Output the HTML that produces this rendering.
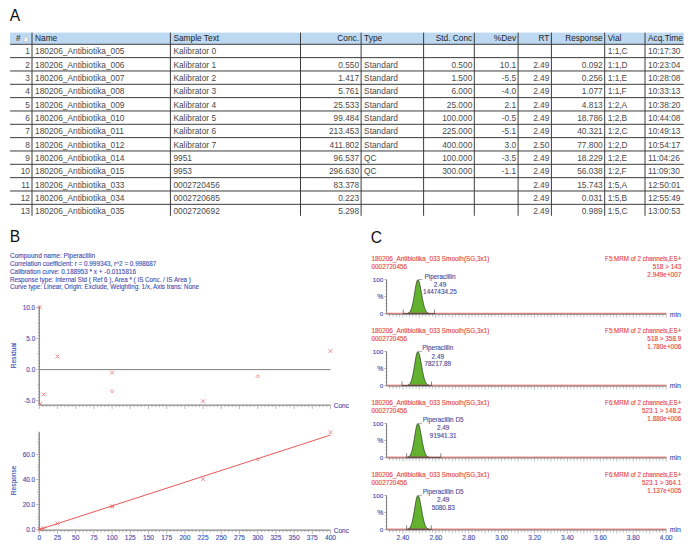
<!DOCTYPE html>
<html><head><meta charset="utf-8"><style>
html,body{margin:0;padding:0;background:#fff;}
svg{display:block;font-family:"Liberation Sans", sans-serif;}
</style></head><body>
<svg width="700" height="555" viewBox="0 0 700 555">
<rect width="700" height="555" fill="#fff"/>
<text x="9.7" y="21.2" font-size="15.6" fill="#111">A</text>
<text x="9.7" y="242.2" font-size="15.6" fill="#111">B</text>
<text x="370.7" y="242.6" font-size="15.6" fill="#111">C</text>
<rect x="10" y="32.6" width="673.8" height="11.699999999999996" fill="#bdd8f1"/>
<line x1="10" y1="44.30" x2="683.8" y2="44.30" stroke="#3c3c3c" stroke-width="1.0"/>
<line x1="10" y1="57.63" x2="683.8" y2="57.63" stroke="#3c3c3c" stroke-width="1.0"/>
<line x1="10" y1="70.97" x2="683.8" y2="70.97" stroke="#3c3c3c" stroke-width="1.0"/>
<line x1="10" y1="84.31" x2="683.8" y2="84.31" stroke="#3c3c3c" stroke-width="1.0"/>
<line x1="10" y1="97.64" x2="683.8" y2="97.64" stroke="#3c3c3c" stroke-width="1.0"/>
<line x1="10" y1="110.98" x2="683.8" y2="110.98" stroke="#3c3c3c" stroke-width="1.0"/>
<line x1="10" y1="124.31" x2="683.8" y2="124.31" stroke="#3c3c3c" stroke-width="1.0"/>
<line x1="10" y1="137.64" x2="683.8" y2="137.64" stroke="#3c3c3c" stroke-width="1.0"/>
<line x1="10" y1="150.98" x2="683.8" y2="150.98" stroke="#3c3c3c" stroke-width="1.0"/>
<line x1="10" y1="164.31" x2="683.8" y2="164.31" stroke="#3c3c3c" stroke-width="1.0"/>
<line x1="10" y1="177.65" x2="683.8" y2="177.65" stroke="#3c3c3c" stroke-width="1.0"/>
<line x1="10" y1="190.99" x2="683.8" y2="190.99" stroke="#3c3c3c" stroke-width="1.0"/>
<line x1="10" y1="204.32" x2="683.8" y2="204.32" stroke="#3c3c3c" stroke-width="1.0"/>
<line x1="32" y1="32.6" x2="32" y2="215.8" stroke="#3c3c3c" stroke-width="1.0"/>
<line x1="170.4" y1="32.6" x2="170.4" y2="215.8" stroke="#3c3c3c" stroke-width="1.0"/>
<line x1="300.5" y1="32.6" x2="300.5" y2="215.8" stroke="#3c3c3c" stroke-width="1.0"/>
<line x1="361.1" y1="32.6" x2="361.1" y2="215.8" stroke="#3c3c3c" stroke-width="1.0"/>
<line x1="423.6" y1="32.6" x2="423.6" y2="215.8" stroke="#3c3c3c" stroke-width="1.0"/>
<line x1="474.3" y1="32.6" x2="474.3" y2="215.8" stroke="#3c3c3c" stroke-width="1.0"/>
<line x1="518.1" y1="32.6" x2="518.1" y2="215.8" stroke="#3c3c3c" stroke-width="1.0"/>
<line x1="551.4" y1="32.6" x2="551.4" y2="215.8" stroke="#3c3c3c" stroke-width="1.0"/>
<line x1="604.7" y1="32.6" x2="604.7" y2="215.8" stroke="#3c3c3c" stroke-width="1.0"/>
<line x1="645" y1="32.6" x2="645" y2="215.8" stroke="#3c3c3c" stroke-width="1.0"/>
<text x="20.6" y="41" font-size="8.35" font-weight="bold" fill="#4a4a4a" text-anchor="end">#</text>
<path d="M23.6 41.4 L26.0 35.0 L28.4 41.4 Z" fill="#fbfbfb" stroke="#b8b8b8" stroke-width="0.6"/>
<text transform="translate(35.00 41.00) scale(0.9435 1)" font-size="8.85" fill="#262626">Name</text>
<text transform="translate(173.40 41.00) scale(0.9435 1)" font-size="8.85" fill="#262626">Sample Text</text>
<text transform="translate(359.10 41.00) scale(0.9435 1)" font-size="8.85" fill="#262626" text-anchor="end">Conc.</text>
<text transform="translate(364.10 41.00) scale(0.9435 1)" font-size="8.85" fill="#262626">Type</text>
<text transform="translate(472.30 41.00) scale(0.9435 1)" font-size="8.85" fill="#262626" text-anchor="end">Std. Conc</text>
<text transform="translate(516.10 41.00) scale(0.9435 1)" font-size="8.85" fill="#262626" text-anchor="end">%Dev</text>
<text transform="translate(549.40 41.00) scale(0.9435 1)" font-size="8.85" fill="#262626" text-anchor="end">RT</text>
<text transform="translate(602.70 41.00) scale(0.9435 1)" font-size="8.85" fill="#262626" text-anchor="end">Response</text>
<text transform="translate(607.70 41.00) scale(0.9435 1)" font-size="8.85" fill="#262626">Vial</text>
<text transform="translate(648.00 41.00) scale(0.9435 1)" font-size="8.85" fill="#262626">Acq.Time</text>
<text transform="translate(30.00 54.30) scale(0.9435 1)" font-size="8.85" fill="#4a4a4a" text-anchor="end">1</text>
<text transform="translate(35.00 54.30) scale(0.9435 1)" font-size="8.85" fill="#4a4a4a">180206_Antibiotika_005</text>
<text transform="translate(173.40 54.30) scale(0.9435 1)" font-size="8.85" fill="#4a4a4a">Kalibrator 0</text>
<text transform="translate(607.70 54.30) scale(0.9435 1)" font-size="8.85" fill="#4a4a4a">1:1,C</text>
<text transform="translate(648.00 54.30) scale(0.9435 1)" font-size="8.85" fill="#4a4a4a">10:17:30</text>
<text transform="translate(30.00 67.63) scale(0.9435 1)" font-size="8.85" fill="#4a4a4a" text-anchor="end">2</text>
<text transform="translate(35.00 67.63) scale(0.9435 1)" font-size="8.85" fill="#4a4a4a">180206_Antibiotika_006</text>
<text transform="translate(173.40 67.63) scale(0.9435 1)" font-size="8.85" fill="#4a4a4a">Kalibrator 1</text>
<text transform="translate(359.10 67.63) scale(0.9435 1)" font-size="8.85" fill="#4a4a4a" text-anchor="end">0.550</text>
<text transform="translate(364.10 67.63) scale(0.9435 1)" font-size="8.85" fill="#4a4a4a">Standard</text>
<text transform="translate(472.30 67.63) scale(0.9435 1)" font-size="8.85" fill="#4a4a4a" text-anchor="end">0.500</text>
<text transform="translate(516.10 67.63) scale(0.9435 1)" font-size="8.85" fill="#4a4a4a" text-anchor="end">10.1</text>
<text transform="translate(549.40 67.63) scale(0.9435 1)" font-size="8.85" fill="#4a4a4a" text-anchor="end">2.49</text>
<text transform="translate(602.70 67.63) scale(0.9435 1)" font-size="8.85" fill="#4a4a4a" text-anchor="end">0.092</text>
<text transform="translate(607.70 67.63) scale(0.9435 1)" font-size="8.85" fill="#4a4a4a">1:1,D</text>
<text transform="translate(648.00 67.63) scale(0.9435 1)" font-size="8.85" fill="#4a4a4a">10:23:04</text>
<text transform="translate(30.00 80.97) scale(0.9435 1)" font-size="8.85" fill="#4a4a4a" text-anchor="end">3</text>
<text transform="translate(35.00 80.97) scale(0.9435 1)" font-size="8.85" fill="#4a4a4a">180206_Antibiotika_007</text>
<text transform="translate(173.40 80.97) scale(0.9435 1)" font-size="8.85" fill="#4a4a4a">Kalibrator 2</text>
<text transform="translate(359.10 80.97) scale(0.9435 1)" font-size="8.85" fill="#4a4a4a" text-anchor="end">1.417</text>
<text transform="translate(364.10 80.97) scale(0.9435 1)" font-size="8.85" fill="#4a4a4a">Standard</text>
<text transform="translate(472.30 80.97) scale(0.9435 1)" font-size="8.85" fill="#4a4a4a" text-anchor="end">1.500</text>
<text transform="translate(516.10 80.97) scale(0.9435 1)" font-size="8.85" fill="#4a4a4a" text-anchor="end">-5.5</text>
<text transform="translate(549.40 80.97) scale(0.9435 1)" font-size="8.85" fill="#4a4a4a" text-anchor="end">2.49</text>
<text transform="translate(602.70 80.97) scale(0.9435 1)" font-size="8.85" fill="#4a4a4a" text-anchor="end">0.256</text>
<text transform="translate(607.70 80.97) scale(0.9435 1)" font-size="8.85" fill="#4a4a4a">1:1,E</text>
<text transform="translate(648.00 80.97) scale(0.9435 1)" font-size="8.85" fill="#4a4a4a">10:28:08</text>
<text transform="translate(30.00 94.31) scale(0.9435 1)" font-size="8.85" fill="#4a4a4a" text-anchor="end">4</text>
<text transform="translate(35.00 94.31) scale(0.9435 1)" font-size="8.85" fill="#4a4a4a">180206_Antibiotika_008</text>
<text transform="translate(173.40 94.31) scale(0.9435 1)" font-size="8.85" fill="#4a4a4a">Kalibrator 3</text>
<text transform="translate(359.10 94.31) scale(0.9435 1)" font-size="8.85" fill="#4a4a4a" text-anchor="end">5.761</text>
<text transform="translate(364.10 94.31) scale(0.9435 1)" font-size="8.85" fill="#4a4a4a">Standard</text>
<text transform="translate(472.30 94.31) scale(0.9435 1)" font-size="8.85" fill="#4a4a4a" text-anchor="end">6.000</text>
<text transform="translate(516.10 94.31) scale(0.9435 1)" font-size="8.85" fill="#4a4a4a" text-anchor="end">-4.0</text>
<text transform="translate(549.40 94.31) scale(0.9435 1)" font-size="8.85" fill="#4a4a4a" text-anchor="end">2.49</text>
<text transform="translate(602.70 94.31) scale(0.9435 1)" font-size="8.85" fill="#4a4a4a" text-anchor="end">1.077</text>
<text transform="translate(607.70 94.31) scale(0.9435 1)" font-size="8.85" fill="#4a4a4a">1:1,F</text>
<text transform="translate(648.00 94.31) scale(0.9435 1)" font-size="8.85" fill="#4a4a4a">10:33:13</text>
<text transform="translate(30.00 107.64) scale(0.9435 1)" font-size="8.85" fill="#4a4a4a" text-anchor="end">5</text>
<text transform="translate(35.00 107.64) scale(0.9435 1)" font-size="8.85" fill="#4a4a4a">180206_Antibiotika_009</text>
<text transform="translate(173.40 107.64) scale(0.9435 1)" font-size="8.85" fill="#4a4a4a">Kalibrator 4</text>
<text transform="translate(359.10 107.64) scale(0.9435 1)" font-size="8.85" fill="#4a4a4a" text-anchor="end">25.533</text>
<text transform="translate(364.10 107.64) scale(0.9435 1)" font-size="8.85" fill="#4a4a4a">Standard</text>
<text transform="translate(472.30 107.64) scale(0.9435 1)" font-size="8.85" fill="#4a4a4a" text-anchor="end">25.000</text>
<text transform="translate(516.10 107.64) scale(0.9435 1)" font-size="8.85" fill="#4a4a4a" text-anchor="end">2.1</text>
<text transform="translate(549.40 107.64) scale(0.9435 1)" font-size="8.85" fill="#4a4a4a" text-anchor="end">2.49</text>
<text transform="translate(602.70 107.64) scale(0.9435 1)" font-size="8.85" fill="#4a4a4a" text-anchor="end">4.813</text>
<text transform="translate(607.70 107.64) scale(0.9435 1)" font-size="8.85" fill="#4a4a4a">1:2,A</text>
<text transform="translate(648.00 107.64) scale(0.9435 1)" font-size="8.85" fill="#4a4a4a">10:38:20</text>
<text transform="translate(30.00 120.98) scale(0.9435 1)" font-size="8.85" fill="#4a4a4a" text-anchor="end">6</text>
<text transform="translate(35.00 120.98) scale(0.9435 1)" font-size="8.85" fill="#4a4a4a">180206_Antibiotika_010</text>
<text transform="translate(173.40 120.98) scale(0.9435 1)" font-size="8.85" fill="#4a4a4a">Kalibrator 5</text>
<text transform="translate(359.10 120.98) scale(0.9435 1)" font-size="8.85" fill="#4a4a4a" text-anchor="end">99.484</text>
<text transform="translate(364.10 120.98) scale(0.9435 1)" font-size="8.85" fill="#4a4a4a">Standard</text>
<text transform="translate(472.30 120.98) scale(0.9435 1)" font-size="8.85" fill="#4a4a4a" text-anchor="end">100.000</text>
<text transform="translate(516.10 120.98) scale(0.9435 1)" font-size="8.85" fill="#4a4a4a" text-anchor="end">-0.5</text>
<text transform="translate(549.40 120.98) scale(0.9435 1)" font-size="8.85" fill="#4a4a4a" text-anchor="end">2.49</text>
<text transform="translate(602.70 120.98) scale(0.9435 1)" font-size="8.85" fill="#4a4a4a" text-anchor="end">18.786</text>
<text transform="translate(607.70 120.98) scale(0.9435 1)" font-size="8.85" fill="#4a4a4a">1:2,B</text>
<text transform="translate(648.00 120.98) scale(0.9435 1)" font-size="8.85" fill="#4a4a4a">10:44:08</text>
<text transform="translate(30.00 134.31) scale(0.9435 1)" font-size="8.85" fill="#4a4a4a" text-anchor="end">7</text>
<text transform="translate(35.00 134.31) scale(0.9435 1)" font-size="8.85" fill="#4a4a4a">180206_Antibiotika_011</text>
<text transform="translate(173.40 134.31) scale(0.9435 1)" font-size="8.85" fill="#4a4a4a">Kalibrator 6</text>
<text transform="translate(359.10 134.31) scale(0.9435 1)" font-size="8.85" fill="#4a4a4a" text-anchor="end">213.453</text>
<text transform="translate(364.10 134.31) scale(0.9435 1)" font-size="8.85" fill="#4a4a4a">Standard</text>
<text transform="translate(472.30 134.31) scale(0.9435 1)" font-size="8.85" fill="#4a4a4a" text-anchor="end">225.000</text>
<text transform="translate(516.10 134.31) scale(0.9435 1)" font-size="8.85" fill="#4a4a4a" text-anchor="end">-5.1</text>
<text transform="translate(549.40 134.31) scale(0.9435 1)" font-size="8.85" fill="#4a4a4a" text-anchor="end">2.49</text>
<text transform="translate(602.70 134.31) scale(0.9435 1)" font-size="8.85" fill="#4a4a4a" text-anchor="end">40.321</text>
<text transform="translate(607.70 134.31) scale(0.9435 1)" font-size="8.85" fill="#4a4a4a">1:2,C</text>
<text transform="translate(648.00 134.31) scale(0.9435 1)" font-size="8.85" fill="#4a4a4a">10:49:13</text>
<text transform="translate(30.00 147.64) scale(0.9435 1)" font-size="8.85" fill="#4a4a4a" text-anchor="end">8</text>
<text transform="translate(35.00 147.64) scale(0.9435 1)" font-size="8.85" fill="#4a4a4a">180206_Antibiotika_012</text>
<text transform="translate(173.40 147.64) scale(0.9435 1)" font-size="8.85" fill="#4a4a4a">Kalibrator 7</text>
<text transform="translate(359.10 147.64) scale(0.9435 1)" font-size="8.85" fill="#4a4a4a" text-anchor="end">411.802</text>
<text transform="translate(364.10 147.64) scale(0.9435 1)" font-size="8.85" fill="#4a4a4a">Standard</text>
<text transform="translate(472.30 147.64) scale(0.9435 1)" font-size="8.85" fill="#4a4a4a" text-anchor="end">400.000</text>
<text transform="translate(516.10 147.64) scale(0.9435 1)" font-size="8.85" fill="#4a4a4a" text-anchor="end">3.0</text>
<text transform="translate(549.40 147.64) scale(0.9435 1)" font-size="8.85" fill="#4a4a4a" text-anchor="end">2.50</text>
<text transform="translate(602.70 147.64) scale(0.9435 1)" font-size="8.85" fill="#4a4a4a" text-anchor="end">77.800</text>
<text transform="translate(607.70 147.64) scale(0.9435 1)" font-size="8.85" fill="#4a4a4a">1:2,D</text>
<text transform="translate(648.00 147.64) scale(0.9435 1)" font-size="8.85" fill="#4a4a4a">10:54:17</text>
<text transform="translate(30.00 160.98) scale(0.9435 1)" font-size="8.85" fill="#4a4a4a" text-anchor="end">9</text>
<text transform="translate(35.00 160.98) scale(0.9435 1)" font-size="8.85" fill="#4a4a4a">180206_Antibiotika_014</text>
<text transform="translate(173.40 160.98) scale(0.9435 1)" font-size="8.85" fill="#4a4a4a">9951</text>
<text transform="translate(359.10 160.98) scale(0.9435 1)" font-size="8.85" fill="#4a4a4a" text-anchor="end">96.537</text>
<text transform="translate(364.10 160.98) scale(0.9435 1)" font-size="8.85" fill="#4a4a4a">QC</text>
<text transform="translate(472.30 160.98) scale(0.9435 1)" font-size="8.85" fill="#4a4a4a" text-anchor="end">100.000</text>
<text transform="translate(516.10 160.98) scale(0.9435 1)" font-size="8.85" fill="#4a4a4a" text-anchor="end">-3.5</text>
<text transform="translate(549.40 160.98) scale(0.9435 1)" font-size="8.85" fill="#4a4a4a" text-anchor="end">2.49</text>
<text transform="translate(602.70 160.98) scale(0.9435 1)" font-size="8.85" fill="#4a4a4a" text-anchor="end">18.229</text>
<text transform="translate(607.70 160.98) scale(0.9435 1)" font-size="8.85" fill="#4a4a4a">1:2,E</text>
<text transform="translate(648.00 160.98) scale(0.9435 1)" font-size="8.85" fill="#4a4a4a">11:04:26</text>
<text transform="translate(30.00 174.31) scale(0.9435 1)" font-size="8.85" fill="#4a4a4a" text-anchor="end">10</text>
<text transform="translate(35.00 174.31) scale(0.9435 1)" font-size="8.85" fill="#4a4a4a">180206_Antibiotika_015</text>
<text transform="translate(173.40 174.31) scale(0.9435 1)" font-size="8.85" fill="#4a4a4a">9953</text>
<text transform="translate(359.10 174.31) scale(0.9435 1)" font-size="8.85" fill="#4a4a4a" text-anchor="end">296.630</text>
<text transform="translate(364.10 174.31) scale(0.9435 1)" font-size="8.85" fill="#4a4a4a">QC</text>
<text transform="translate(472.30 174.31) scale(0.9435 1)" font-size="8.85" fill="#4a4a4a" text-anchor="end">300.000</text>
<text transform="translate(516.10 174.31) scale(0.9435 1)" font-size="8.85" fill="#4a4a4a" text-anchor="end">-1.1</text>
<text transform="translate(549.40 174.31) scale(0.9435 1)" font-size="8.85" fill="#4a4a4a" text-anchor="end">2.49</text>
<text transform="translate(602.70 174.31) scale(0.9435 1)" font-size="8.85" fill="#4a4a4a" text-anchor="end">56.038</text>
<text transform="translate(607.70 174.31) scale(0.9435 1)" font-size="8.85" fill="#4a4a4a">1:2,F</text>
<text transform="translate(648.00 174.31) scale(0.9435 1)" font-size="8.85" fill="#4a4a4a">11:09:30</text>
<text transform="translate(30.00 187.65) scale(0.9435 1)" font-size="8.85" fill="#4a4a4a" text-anchor="end">11</text>
<text transform="translate(35.00 187.65) scale(0.9435 1)" font-size="8.85" fill="#4a4a4a">180206_Antibiotika_033</text>
<text transform="translate(173.40 187.65) scale(0.9435 1)" font-size="8.85" fill="#4a4a4a">0002720456</text>
<text transform="translate(359.10 187.65) scale(0.9435 1)" font-size="8.85" fill="#4a4a4a" text-anchor="end">83.378</text>
<text transform="translate(549.40 187.65) scale(0.9435 1)" font-size="8.85" fill="#4a4a4a" text-anchor="end">2.49</text>
<text transform="translate(602.70 187.65) scale(0.9435 1)" font-size="8.85" fill="#4a4a4a" text-anchor="end">15.743</text>
<text transform="translate(607.70 187.65) scale(0.9435 1)" font-size="8.85" fill="#4a4a4a">1:5,A</text>
<text transform="translate(648.00 187.65) scale(0.9435 1)" font-size="8.85" fill="#4a4a4a">12:50:01</text>
<text transform="translate(30.00 200.99) scale(0.9435 1)" font-size="8.85" fill="#4a4a4a" text-anchor="end">12</text>
<text transform="translate(35.00 200.99) scale(0.9435 1)" font-size="8.85" fill="#4a4a4a">180206_Antibiotika_034</text>
<text transform="translate(173.40 200.99) scale(0.9435 1)" font-size="8.85" fill="#4a4a4a">0002720685</text>
<text transform="translate(359.10 200.99) scale(0.9435 1)" font-size="8.85" fill="#4a4a4a" text-anchor="end">0.223</text>
<text transform="translate(549.40 200.99) scale(0.9435 1)" font-size="8.85" fill="#4a4a4a" text-anchor="end">2.49</text>
<text transform="translate(602.70 200.99) scale(0.9435 1)" font-size="8.85" fill="#4a4a4a" text-anchor="end">0.031</text>
<text transform="translate(607.70 200.99) scale(0.9435 1)" font-size="8.85" fill="#4a4a4a">1:5,B</text>
<text transform="translate(648.00 200.99) scale(0.9435 1)" font-size="8.85" fill="#4a4a4a">12:55:49</text>
<text transform="translate(30.00 214.32) scale(0.9435 1)" font-size="8.85" fill="#4a4a4a" text-anchor="end">13</text>
<text transform="translate(35.00 214.32) scale(0.9435 1)" font-size="8.85" fill="#4a4a4a">180206_Antibiotika_035</text>
<text transform="translate(173.40 214.32) scale(0.9435 1)" font-size="8.85" fill="#4a4a4a">0002720692</text>
<text transform="translate(359.10 214.32) scale(0.9435 1)" font-size="8.85" fill="#4a4a4a" text-anchor="end">5.298</text>
<text transform="translate(549.40 214.32) scale(0.9435 1)" font-size="8.85" fill="#4a4a4a" text-anchor="end">2.49</text>
<text transform="translate(602.70 214.32) scale(0.9435 1)" font-size="8.85" fill="#4a4a4a" text-anchor="end">0.989</text>
<text transform="translate(607.70 214.32) scale(0.9435 1)" font-size="8.85" fill="#4a4a4a">1:5,C</text>
<text transform="translate(648.00 214.32) scale(0.9435 1)" font-size="8.85" fill="#4a4a4a">13:00:53</text>
<text x="10" y="258.30" font-size="6.5" fill="#3f4fb0" stroke="#3f4fb0" stroke-width="0.12" textLength="85.0" lengthAdjust="spacingAndGlyphs">Compound name: Piperacillin</text>
<text x="10" y="266.05" font-size="6.5" fill="#3f4fb0" stroke="#3f4fb0" stroke-width="0.12" textLength="146.3" lengthAdjust="spacingAndGlyphs">Correlation coefficient: r = 0.999343, r^2 = 0.998687</text>
<text x="10" y="273.80" font-size="6.5" fill="#3f4fb0" stroke="#3f4fb0" stroke-width="0.12" textLength="126.0" lengthAdjust="spacingAndGlyphs">Calibration curve: 0.188953 * x + -0.0115816</text>
<text x="10" y="281.55" font-size="6.5" fill="#3f4fb0" stroke="#3f4fb0" stroke-width="0.12" textLength="180.9" lengthAdjust="spacingAndGlyphs">Response type: Internal Std ( Ref 6 ), Area * ( IS Conc. / IS Area )</text>
<text x="10" y="289.30" font-size="6.5" fill="#3f4fb0" stroke="#3f4fb0" stroke-width="0.12" textLength="189.1" lengthAdjust="spacingAndGlyphs">Curve type: Linear, Origin: Exclude, Weighting: 1/x, Axis trans: None</text>
<line x1="39.3" y1="306.2" x2="39.3" y2="405.1" stroke="#8a8a8a" stroke-width="1.3"/>
<line x1="39.3" y1="405.1" x2="330.5" y2="405.1" stroke="#8a8a8a" stroke-width="1.3"/>
<line x1="39.3" y1="369.6" x2="330.5" y2="369.6" stroke="#707070" stroke-width="0.9"/>
<line x1="36.30" y1="307.60" x2="39.3" y2="307.60" stroke="#8a8a8a" stroke-width="0.6"/>
<line x1="37.90" y1="310.70" x2="39.3" y2="310.70" stroke="#8a8a8a" stroke-width="0.6"/>
<line x1="37.90" y1="313.80" x2="39.3" y2="313.80" stroke="#8a8a8a" stroke-width="0.6"/>
<line x1="37.90" y1="316.90" x2="39.3" y2="316.90" stroke="#8a8a8a" stroke-width="0.6"/>
<line x1="37.90" y1="320.00" x2="39.3" y2="320.00" stroke="#8a8a8a" stroke-width="0.6"/>
<line x1="37.10" y1="323.10" x2="39.3" y2="323.10" stroke="#8a8a8a" stroke-width="0.6"/>
<line x1="37.90" y1="326.20" x2="39.3" y2="326.20" stroke="#8a8a8a" stroke-width="0.6"/>
<line x1="37.90" y1="329.30" x2="39.3" y2="329.30" stroke="#8a8a8a" stroke-width="0.6"/>
<line x1="37.90" y1="332.40" x2="39.3" y2="332.40" stroke="#8a8a8a" stroke-width="0.6"/>
<line x1="37.90" y1="335.50" x2="39.3" y2="335.50" stroke="#8a8a8a" stroke-width="0.6"/>
<line x1="36.30" y1="338.60" x2="39.3" y2="338.60" stroke="#8a8a8a" stroke-width="0.6"/>
<line x1="37.90" y1="341.70" x2="39.3" y2="341.70" stroke="#8a8a8a" stroke-width="0.6"/>
<line x1="37.90" y1="344.80" x2="39.3" y2="344.80" stroke="#8a8a8a" stroke-width="0.6"/>
<line x1="37.90" y1="347.90" x2="39.3" y2="347.90" stroke="#8a8a8a" stroke-width="0.6"/>
<line x1="37.90" y1="351.00" x2="39.3" y2="351.00" stroke="#8a8a8a" stroke-width="0.6"/>
<line x1="37.10" y1="354.10" x2="39.3" y2="354.10" stroke="#8a8a8a" stroke-width="0.6"/>
<line x1="37.90" y1="357.20" x2="39.3" y2="357.20" stroke="#8a8a8a" stroke-width="0.6"/>
<line x1="37.90" y1="360.30" x2="39.3" y2="360.30" stroke="#8a8a8a" stroke-width="0.6"/>
<line x1="37.90" y1="363.40" x2="39.3" y2="363.40" stroke="#8a8a8a" stroke-width="0.6"/>
<line x1="37.90" y1="366.50" x2="39.3" y2="366.50" stroke="#8a8a8a" stroke-width="0.6"/>
<line x1="36.30" y1="369.60" x2="39.3" y2="369.60" stroke="#8a8a8a" stroke-width="0.6"/>
<line x1="37.90" y1="372.70" x2="39.3" y2="372.70" stroke="#8a8a8a" stroke-width="0.6"/>
<line x1="37.90" y1="375.80" x2="39.3" y2="375.80" stroke="#8a8a8a" stroke-width="0.6"/>
<line x1="37.90" y1="378.90" x2="39.3" y2="378.90" stroke="#8a8a8a" stroke-width="0.6"/>
<line x1="37.90" y1="382.00" x2="39.3" y2="382.00" stroke="#8a8a8a" stroke-width="0.6"/>
<line x1="37.10" y1="385.10" x2="39.3" y2="385.10" stroke="#8a8a8a" stroke-width="0.6"/>
<line x1="37.90" y1="388.20" x2="39.3" y2="388.20" stroke="#8a8a8a" stroke-width="0.6"/>
<line x1="37.90" y1="391.30" x2="39.3" y2="391.30" stroke="#8a8a8a" stroke-width="0.6"/>
<line x1="37.90" y1="394.40" x2="39.3" y2="394.40" stroke="#8a8a8a" stroke-width="0.6"/>
<line x1="37.90" y1="397.50" x2="39.3" y2="397.50" stroke="#8a8a8a" stroke-width="0.6"/>
<line x1="36.30" y1="400.60" x2="39.3" y2="400.60" stroke="#8a8a8a" stroke-width="0.6"/>
<line x1="37.90" y1="403.70" x2="39.3" y2="403.70" stroke="#8a8a8a" stroke-width="0.6"/>
<text x="35.2" y="310.20" font-size="6.4" fill="#3f4fb0" stroke="#3f4fb0" stroke-width="0.12" text-anchor="end">10.0</text>
<text x="35.2" y="341.20" font-size="6.4" fill="#3f4fb0" stroke="#3f4fb0" stroke-width="0.12" text-anchor="end">5.0</text>
<text x="35.2" y="372.20" font-size="6.4" fill="#3f4fb0" stroke="#3f4fb0" stroke-width="0.12" text-anchor="end">0.0</text>
<text x="35.2" y="403.20" font-size="6.4" fill="#3f4fb0" stroke="#3f4fb0" stroke-width="0.12" text-anchor="end">-5.0</text>
<line x1="39.30" y1="405.1" x2="39.30" y2="408.90000000000003" stroke="#8a8a8a" stroke-width="0.6"/>
<line x1="42.94" y1="405.1" x2="42.94" y2="407.1" stroke="#8a8a8a" stroke-width="0.6"/>
<line x1="46.58" y1="405.1" x2="46.58" y2="407.1" stroke="#8a8a8a" stroke-width="0.6"/>
<line x1="50.22" y1="405.1" x2="50.22" y2="407.1" stroke="#8a8a8a" stroke-width="0.6"/>
<line x1="53.86" y1="405.1" x2="53.86" y2="407.1" stroke="#8a8a8a" stroke-width="0.6"/>
<line x1="57.50" y1="405.1" x2="57.50" y2="408.90000000000003" stroke="#8a8a8a" stroke-width="0.6"/>
<line x1="61.14" y1="405.1" x2="61.14" y2="407.1" stroke="#8a8a8a" stroke-width="0.6"/>
<line x1="64.78" y1="405.1" x2="64.78" y2="407.1" stroke="#8a8a8a" stroke-width="0.6"/>
<line x1="68.42" y1="405.1" x2="68.42" y2="407.1" stroke="#8a8a8a" stroke-width="0.6"/>
<line x1="72.06" y1="405.1" x2="72.06" y2="407.1" stroke="#8a8a8a" stroke-width="0.6"/>
<line x1="75.70" y1="405.1" x2="75.70" y2="408.90000000000003" stroke="#8a8a8a" stroke-width="0.6"/>
<line x1="79.34" y1="405.1" x2="79.34" y2="407.1" stroke="#8a8a8a" stroke-width="0.6"/>
<line x1="82.98" y1="405.1" x2="82.98" y2="407.1" stroke="#8a8a8a" stroke-width="0.6"/>
<line x1="86.62" y1="405.1" x2="86.62" y2="407.1" stroke="#8a8a8a" stroke-width="0.6"/>
<line x1="90.26" y1="405.1" x2="90.26" y2="407.1" stroke="#8a8a8a" stroke-width="0.6"/>
<line x1="93.90" y1="405.1" x2="93.90" y2="408.90000000000003" stroke="#8a8a8a" stroke-width="0.6"/>
<line x1="97.54" y1="405.1" x2="97.54" y2="407.1" stroke="#8a8a8a" stroke-width="0.6"/>
<line x1="101.18" y1="405.1" x2="101.18" y2="407.1" stroke="#8a8a8a" stroke-width="0.6"/>
<line x1="104.82" y1="405.1" x2="104.82" y2="407.1" stroke="#8a8a8a" stroke-width="0.6"/>
<line x1="108.46" y1="405.1" x2="108.46" y2="407.1" stroke="#8a8a8a" stroke-width="0.6"/>
<line x1="112.10" y1="405.1" x2="112.10" y2="408.90000000000003" stroke="#8a8a8a" stroke-width="0.6"/>
<line x1="115.74" y1="405.1" x2="115.74" y2="407.1" stroke="#8a8a8a" stroke-width="0.6"/>
<line x1="119.38" y1="405.1" x2="119.38" y2="407.1" stroke="#8a8a8a" stroke-width="0.6"/>
<line x1="123.02" y1="405.1" x2="123.02" y2="407.1" stroke="#8a8a8a" stroke-width="0.6"/>
<line x1="126.66" y1="405.1" x2="126.66" y2="407.1" stroke="#8a8a8a" stroke-width="0.6"/>
<line x1="130.30" y1="405.1" x2="130.30" y2="408.90000000000003" stroke="#8a8a8a" stroke-width="0.6"/>
<line x1="133.94" y1="405.1" x2="133.94" y2="407.1" stroke="#8a8a8a" stroke-width="0.6"/>
<line x1="137.58" y1="405.1" x2="137.58" y2="407.1" stroke="#8a8a8a" stroke-width="0.6"/>
<line x1="141.22" y1="405.1" x2="141.22" y2="407.1" stroke="#8a8a8a" stroke-width="0.6"/>
<line x1="144.86" y1="405.1" x2="144.86" y2="407.1" stroke="#8a8a8a" stroke-width="0.6"/>
<line x1="148.50" y1="405.1" x2="148.50" y2="408.90000000000003" stroke="#8a8a8a" stroke-width="0.6"/>
<line x1="152.14" y1="405.1" x2="152.14" y2="407.1" stroke="#8a8a8a" stroke-width="0.6"/>
<line x1="155.78" y1="405.1" x2="155.78" y2="407.1" stroke="#8a8a8a" stroke-width="0.6"/>
<line x1="159.42" y1="405.1" x2="159.42" y2="407.1" stroke="#8a8a8a" stroke-width="0.6"/>
<line x1="163.06" y1="405.1" x2="163.06" y2="407.1" stroke="#8a8a8a" stroke-width="0.6"/>
<line x1="166.70" y1="405.1" x2="166.70" y2="408.90000000000003" stroke="#8a8a8a" stroke-width="0.6"/>
<line x1="170.34" y1="405.1" x2="170.34" y2="407.1" stroke="#8a8a8a" stroke-width="0.6"/>
<line x1="173.98" y1="405.1" x2="173.98" y2="407.1" stroke="#8a8a8a" stroke-width="0.6"/>
<line x1="177.62" y1="405.1" x2="177.62" y2="407.1" stroke="#8a8a8a" stroke-width="0.6"/>
<line x1="181.26" y1="405.1" x2="181.26" y2="407.1" stroke="#8a8a8a" stroke-width="0.6"/>
<line x1="184.90" y1="405.1" x2="184.90" y2="408.90000000000003" stroke="#8a8a8a" stroke-width="0.6"/>
<line x1="188.54" y1="405.1" x2="188.54" y2="407.1" stroke="#8a8a8a" stroke-width="0.6"/>
<line x1="192.18" y1="405.1" x2="192.18" y2="407.1" stroke="#8a8a8a" stroke-width="0.6"/>
<line x1="195.82" y1="405.1" x2="195.82" y2="407.1" stroke="#8a8a8a" stroke-width="0.6"/>
<line x1="199.46" y1="405.1" x2="199.46" y2="407.1" stroke="#8a8a8a" stroke-width="0.6"/>
<line x1="203.10" y1="405.1" x2="203.10" y2="408.90000000000003" stroke="#8a8a8a" stroke-width="0.6"/>
<line x1="206.74" y1="405.1" x2="206.74" y2="407.1" stroke="#8a8a8a" stroke-width="0.6"/>
<line x1="210.38" y1="405.1" x2="210.38" y2="407.1" stroke="#8a8a8a" stroke-width="0.6"/>
<line x1="214.02" y1="405.1" x2="214.02" y2="407.1" stroke="#8a8a8a" stroke-width="0.6"/>
<line x1="217.66" y1="405.1" x2="217.66" y2="407.1" stroke="#8a8a8a" stroke-width="0.6"/>
<line x1="221.30" y1="405.1" x2="221.30" y2="408.90000000000003" stroke="#8a8a8a" stroke-width="0.6"/>
<line x1="224.94" y1="405.1" x2="224.94" y2="407.1" stroke="#8a8a8a" stroke-width="0.6"/>
<line x1="228.58" y1="405.1" x2="228.58" y2="407.1" stroke="#8a8a8a" stroke-width="0.6"/>
<line x1="232.22" y1="405.1" x2="232.22" y2="407.1" stroke="#8a8a8a" stroke-width="0.6"/>
<line x1="235.86" y1="405.1" x2="235.86" y2="407.1" stroke="#8a8a8a" stroke-width="0.6"/>
<line x1="239.50" y1="405.1" x2="239.50" y2="408.90000000000003" stroke="#8a8a8a" stroke-width="0.6"/>
<line x1="243.14" y1="405.1" x2="243.14" y2="407.1" stroke="#8a8a8a" stroke-width="0.6"/>
<line x1="246.78" y1="405.1" x2="246.78" y2="407.1" stroke="#8a8a8a" stroke-width="0.6"/>
<line x1="250.42" y1="405.1" x2="250.42" y2="407.1" stroke="#8a8a8a" stroke-width="0.6"/>
<line x1="254.06" y1="405.1" x2="254.06" y2="407.1" stroke="#8a8a8a" stroke-width="0.6"/>
<line x1="257.70" y1="405.1" x2="257.70" y2="408.90000000000003" stroke="#8a8a8a" stroke-width="0.6"/>
<line x1="261.34" y1="405.1" x2="261.34" y2="407.1" stroke="#8a8a8a" stroke-width="0.6"/>
<line x1="264.98" y1="405.1" x2="264.98" y2="407.1" stroke="#8a8a8a" stroke-width="0.6"/>
<line x1="268.62" y1="405.1" x2="268.62" y2="407.1" stroke="#8a8a8a" stroke-width="0.6"/>
<line x1="272.26" y1="405.1" x2="272.26" y2="407.1" stroke="#8a8a8a" stroke-width="0.6"/>
<line x1="275.90" y1="405.1" x2="275.90" y2="408.90000000000003" stroke="#8a8a8a" stroke-width="0.6"/>
<line x1="279.54" y1="405.1" x2="279.54" y2="407.1" stroke="#8a8a8a" stroke-width="0.6"/>
<line x1="283.18" y1="405.1" x2="283.18" y2="407.1" stroke="#8a8a8a" stroke-width="0.6"/>
<line x1="286.82" y1="405.1" x2="286.82" y2="407.1" stroke="#8a8a8a" stroke-width="0.6"/>
<line x1="290.46" y1="405.1" x2="290.46" y2="407.1" stroke="#8a8a8a" stroke-width="0.6"/>
<line x1="294.10" y1="405.1" x2="294.10" y2="408.90000000000003" stroke="#8a8a8a" stroke-width="0.6"/>
<line x1="297.74" y1="405.1" x2="297.74" y2="407.1" stroke="#8a8a8a" stroke-width="0.6"/>
<line x1="301.38" y1="405.1" x2="301.38" y2="407.1" stroke="#8a8a8a" stroke-width="0.6"/>
<line x1="305.02" y1="405.1" x2="305.02" y2="407.1" stroke="#8a8a8a" stroke-width="0.6"/>
<line x1="308.66" y1="405.1" x2="308.66" y2="407.1" stroke="#8a8a8a" stroke-width="0.6"/>
<line x1="312.30" y1="405.1" x2="312.30" y2="408.90000000000003" stroke="#8a8a8a" stroke-width="0.6"/>
<line x1="315.94" y1="405.1" x2="315.94" y2="407.1" stroke="#8a8a8a" stroke-width="0.6"/>
<line x1="319.58" y1="405.1" x2="319.58" y2="407.1" stroke="#8a8a8a" stroke-width="0.6"/>
<line x1="323.22" y1="405.1" x2="323.22" y2="407.1" stroke="#8a8a8a" stroke-width="0.6"/>
<line x1="326.86" y1="405.1" x2="326.86" y2="407.1" stroke="#8a8a8a" stroke-width="0.6"/>
<line x1="330.50" y1="405.1" x2="330.50" y2="408.90000000000003" stroke="#8a8a8a" stroke-width="0.6"/>
<text x="333.7" y="407.6" font-size="6.55" fill="#3f4fb0" stroke="#3f4fb0" stroke-width="0.12">Conc</text>
<text transform="translate(15.6 355.3) rotate(-90)" font-size="6.6" fill="#3f4fb0" stroke="#3f4fb0" stroke-width="0.12" text-anchor="middle">Residual</text>
<path d="M37.66 304.98 L41.66 308.98 M37.66 308.98 L41.66 304.98" stroke="#ec5a5a" stroke-width="0.65" fill="none"/>
<path d="M38.39 401.70 L42.39 405.70 M38.39 405.70 L42.39 401.70" stroke="#ec5a5a" stroke-width="0.65" fill="none"/>
<path d="M41.67 392.40 L45.67 396.40 M41.67 396.40 L45.67 392.40" stroke="#ec5a5a" stroke-width="0.65" fill="none"/>
<path d="M55.50 354.58 L59.50 358.58 M55.50 358.58 L59.50 354.58" stroke="#ec5a5a" stroke-width="0.65" fill="none"/>
<path d="M110.10 370.70 L114.10 374.70 M110.10 374.70 L114.10 370.70" stroke="#ec5a5a" stroke-width="0.65" fill="none"/>
<path d="M201.10 399.22 L205.10 403.22 M201.10 403.22 L205.10 399.22" stroke="#ec5a5a" stroke-width="0.65" fill="none"/>
<path d="M328.50 349.00 L332.50 353.00 M328.50 353.00 L332.50 349.00" stroke="#ec5a5a" stroke-width="0.65" fill="none"/>
<path d="M112.10 389.70 L113.70 391.30 L112.10 392.90 L110.50 391.30 Z" stroke="#ec5a5a" stroke-width="0.65" fill="none"/>
<path d="M257.70 374.82 L259.30 376.42 L257.70 378.02 L256.10 376.42 Z" stroke="#ec5a5a" stroke-width="0.65" fill="none"/>
<line x1="39.3" y1="432.2" x2="39.3" y2="530.1" stroke="#8a8a8a" stroke-width="1.3"/>
<line x1="39.3" y1="530.1" x2="330.5" y2="530.1" stroke="#8a8a8a" stroke-width="1.3"/>
<line x1="36.30" y1="529.50" x2="39.3" y2="529.50" stroke="#8a8a8a" stroke-width="0.6"/>
<line x1="37.90" y1="527.00" x2="39.3" y2="527.00" stroke="#8a8a8a" stroke-width="0.6"/>
<line x1="37.90" y1="524.50" x2="39.3" y2="524.50" stroke="#8a8a8a" stroke-width="0.6"/>
<line x1="37.90" y1="522.00" x2="39.3" y2="522.00" stroke="#8a8a8a" stroke-width="0.6"/>
<line x1="37.90" y1="519.50" x2="39.3" y2="519.50" stroke="#8a8a8a" stroke-width="0.6"/>
<line x1="37.10" y1="517.00" x2="39.3" y2="517.00" stroke="#8a8a8a" stroke-width="0.6"/>
<line x1="37.90" y1="514.50" x2="39.3" y2="514.50" stroke="#8a8a8a" stroke-width="0.6"/>
<line x1="37.90" y1="512.00" x2="39.3" y2="512.00" stroke="#8a8a8a" stroke-width="0.6"/>
<line x1="37.90" y1="509.50" x2="39.3" y2="509.50" stroke="#8a8a8a" stroke-width="0.6"/>
<line x1="37.90" y1="507.00" x2="39.3" y2="507.00" stroke="#8a8a8a" stroke-width="0.6"/>
<line x1="36.30" y1="504.50" x2="39.3" y2="504.50" stroke="#8a8a8a" stroke-width="0.6"/>
<line x1="37.90" y1="502.00" x2="39.3" y2="502.00" stroke="#8a8a8a" stroke-width="0.6"/>
<line x1="37.90" y1="499.50" x2="39.3" y2="499.50" stroke="#8a8a8a" stroke-width="0.6"/>
<line x1="37.90" y1="497.00" x2="39.3" y2="497.00" stroke="#8a8a8a" stroke-width="0.6"/>
<line x1="37.90" y1="494.50" x2="39.3" y2="494.50" stroke="#8a8a8a" stroke-width="0.6"/>
<line x1="37.10" y1="492.00" x2="39.3" y2="492.00" stroke="#8a8a8a" stroke-width="0.6"/>
<line x1="37.90" y1="489.50" x2="39.3" y2="489.50" stroke="#8a8a8a" stroke-width="0.6"/>
<line x1="37.90" y1="487.00" x2="39.3" y2="487.00" stroke="#8a8a8a" stroke-width="0.6"/>
<line x1="37.90" y1="484.50" x2="39.3" y2="484.50" stroke="#8a8a8a" stroke-width="0.6"/>
<line x1="37.90" y1="482.00" x2="39.3" y2="482.00" stroke="#8a8a8a" stroke-width="0.6"/>
<line x1="36.30" y1="479.50" x2="39.3" y2="479.50" stroke="#8a8a8a" stroke-width="0.6"/>
<line x1="37.90" y1="477.00" x2="39.3" y2="477.00" stroke="#8a8a8a" stroke-width="0.6"/>
<line x1="37.90" y1="474.50" x2="39.3" y2="474.50" stroke="#8a8a8a" stroke-width="0.6"/>
<line x1="37.90" y1="472.00" x2="39.3" y2="472.00" stroke="#8a8a8a" stroke-width="0.6"/>
<line x1="37.90" y1="469.50" x2="39.3" y2="469.50" stroke="#8a8a8a" stroke-width="0.6"/>
<line x1="37.10" y1="467.00" x2="39.3" y2="467.00" stroke="#8a8a8a" stroke-width="0.6"/>
<line x1="37.90" y1="464.50" x2="39.3" y2="464.50" stroke="#8a8a8a" stroke-width="0.6"/>
<line x1="37.90" y1="462.00" x2="39.3" y2="462.00" stroke="#8a8a8a" stroke-width="0.6"/>
<line x1="37.90" y1="459.50" x2="39.3" y2="459.50" stroke="#8a8a8a" stroke-width="0.6"/>
<line x1="37.90" y1="457.00" x2="39.3" y2="457.00" stroke="#8a8a8a" stroke-width="0.6"/>
<line x1="36.30" y1="454.50" x2="39.3" y2="454.50" stroke="#8a8a8a" stroke-width="0.6"/>
<line x1="37.90" y1="452.00" x2="39.3" y2="452.00" stroke="#8a8a8a" stroke-width="0.6"/>
<line x1="37.90" y1="449.50" x2="39.3" y2="449.50" stroke="#8a8a8a" stroke-width="0.6"/>
<line x1="37.90" y1="447.00" x2="39.3" y2="447.00" stroke="#8a8a8a" stroke-width="0.6"/>
<line x1="37.90" y1="444.50" x2="39.3" y2="444.50" stroke="#8a8a8a" stroke-width="0.6"/>
<line x1="37.10" y1="442.00" x2="39.3" y2="442.00" stroke="#8a8a8a" stroke-width="0.6"/>
<line x1="37.90" y1="439.50" x2="39.3" y2="439.50" stroke="#8a8a8a" stroke-width="0.6"/>
<line x1="37.90" y1="437.00" x2="39.3" y2="437.00" stroke="#8a8a8a" stroke-width="0.6"/>
<line x1="37.90" y1="434.50" x2="39.3" y2="434.50" stroke="#8a8a8a" stroke-width="0.6"/>
<line x1="37.90" y1="432.00" x2="39.3" y2="432.00" stroke="#8a8a8a" stroke-width="0.6"/>
<text x="35.2" y="532.00" font-size="6.4" fill="#3f4fb0" stroke="#3f4fb0" stroke-width="0.12" text-anchor="end">0.0</text>
<text x="35.2" y="507.00" font-size="6.4" fill="#3f4fb0" stroke="#3f4fb0" stroke-width="0.12" text-anchor="end">20.0</text>
<text x="35.2" y="482.00" font-size="6.4" fill="#3f4fb0" stroke="#3f4fb0" stroke-width="0.12" text-anchor="end">40.0</text>
<text x="35.2" y="457.00" font-size="6.4" fill="#3f4fb0" stroke="#3f4fb0" stroke-width="0.12" text-anchor="end">60.0</text>
<line x1="39.30" y1="530.1" x2="39.30" y2="533.9" stroke="#8a8a8a" stroke-width="0.6"/>
<line x1="42.94" y1="530.1" x2="42.94" y2="532.1" stroke="#8a8a8a" stroke-width="0.6"/>
<line x1="46.58" y1="530.1" x2="46.58" y2="532.1" stroke="#8a8a8a" stroke-width="0.6"/>
<line x1="50.22" y1="530.1" x2="50.22" y2="532.1" stroke="#8a8a8a" stroke-width="0.6"/>
<line x1="53.86" y1="530.1" x2="53.86" y2="532.1" stroke="#8a8a8a" stroke-width="0.6"/>
<line x1="57.50" y1="530.1" x2="57.50" y2="533.9" stroke="#8a8a8a" stroke-width="0.6"/>
<line x1="61.14" y1="530.1" x2="61.14" y2="532.1" stroke="#8a8a8a" stroke-width="0.6"/>
<line x1="64.78" y1="530.1" x2="64.78" y2="532.1" stroke="#8a8a8a" stroke-width="0.6"/>
<line x1="68.42" y1="530.1" x2="68.42" y2="532.1" stroke="#8a8a8a" stroke-width="0.6"/>
<line x1="72.06" y1="530.1" x2="72.06" y2="532.1" stroke="#8a8a8a" stroke-width="0.6"/>
<line x1="75.70" y1="530.1" x2="75.70" y2="533.9" stroke="#8a8a8a" stroke-width="0.6"/>
<line x1="79.34" y1="530.1" x2="79.34" y2="532.1" stroke="#8a8a8a" stroke-width="0.6"/>
<line x1="82.98" y1="530.1" x2="82.98" y2="532.1" stroke="#8a8a8a" stroke-width="0.6"/>
<line x1="86.62" y1="530.1" x2="86.62" y2="532.1" stroke="#8a8a8a" stroke-width="0.6"/>
<line x1="90.26" y1="530.1" x2="90.26" y2="532.1" stroke="#8a8a8a" stroke-width="0.6"/>
<line x1="93.90" y1="530.1" x2="93.90" y2="533.9" stroke="#8a8a8a" stroke-width="0.6"/>
<line x1="97.54" y1="530.1" x2="97.54" y2="532.1" stroke="#8a8a8a" stroke-width="0.6"/>
<line x1="101.18" y1="530.1" x2="101.18" y2="532.1" stroke="#8a8a8a" stroke-width="0.6"/>
<line x1="104.82" y1="530.1" x2="104.82" y2="532.1" stroke="#8a8a8a" stroke-width="0.6"/>
<line x1="108.46" y1="530.1" x2="108.46" y2="532.1" stroke="#8a8a8a" stroke-width="0.6"/>
<line x1="112.10" y1="530.1" x2="112.10" y2="533.9" stroke="#8a8a8a" stroke-width="0.6"/>
<line x1="115.74" y1="530.1" x2="115.74" y2="532.1" stroke="#8a8a8a" stroke-width="0.6"/>
<line x1="119.38" y1="530.1" x2="119.38" y2="532.1" stroke="#8a8a8a" stroke-width="0.6"/>
<line x1="123.02" y1="530.1" x2="123.02" y2="532.1" stroke="#8a8a8a" stroke-width="0.6"/>
<line x1="126.66" y1="530.1" x2="126.66" y2="532.1" stroke="#8a8a8a" stroke-width="0.6"/>
<line x1="130.30" y1="530.1" x2="130.30" y2="533.9" stroke="#8a8a8a" stroke-width="0.6"/>
<line x1="133.94" y1="530.1" x2="133.94" y2="532.1" stroke="#8a8a8a" stroke-width="0.6"/>
<line x1="137.58" y1="530.1" x2="137.58" y2="532.1" stroke="#8a8a8a" stroke-width="0.6"/>
<line x1="141.22" y1="530.1" x2="141.22" y2="532.1" stroke="#8a8a8a" stroke-width="0.6"/>
<line x1="144.86" y1="530.1" x2="144.86" y2="532.1" stroke="#8a8a8a" stroke-width="0.6"/>
<line x1="148.50" y1="530.1" x2="148.50" y2="533.9" stroke="#8a8a8a" stroke-width="0.6"/>
<line x1="152.14" y1="530.1" x2="152.14" y2="532.1" stroke="#8a8a8a" stroke-width="0.6"/>
<line x1="155.78" y1="530.1" x2="155.78" y2="532.1" stroke="#8a8a8a" stroke-width="0.6"/>
<line x1="159.42" y1="530.1" x2="159.42" y2="532.1" stroke="#8a8a8a" stroke-width="0.6"/>
<line x1="163.06" y1="530.1" x2="163.06" y2="532.1" stroke="#8a8a8a" stroke-width="0.6"/>
<line x1="166.70" y1="530.1" x2="166.70" y2="533.9" stroke="#8a8a8a" stroke-width="0.6"/>
<line x1="170.34" y1="530.1" x2="170.34" y2="532.1" stroke="#8a8a8a" stroke-width="0.6"/>
<line x1="173.98" y1="530.1" x2="173.98" y2="532.1" stroke="#8a8a8a" stroke-width="0.6"/>
<line x1="177.62" y1="530.1" x2="177.62" y2="532.1" stroke="#8a8a8a" stroke-width="0.6"/>
<line x1="181.26" y1="530.1" x2="181.26" y2="532.1" stroke="#8a8a8a" stroke-width="0.6"/>
<line x1="184.90" y1="530.1" x2="184.90" y2="533.9" stroke="#8a8a8a" stroke-width="0.6"/>
<line x1="188.54" y1="530.1" x2="188.54" y2="532.1" stroke="#8a8a8a" stroke-width="0.6"/>
<line x1="192.18" y1="530.1" x2="192.18" y2="532.1" stroke="#8a8a8a" stroke-width="0.6"/>
<line x1="195.82" y1="530.1" x2="195.82" y2="532.1" stroke="#8a8a8a" stroke-width="0.6"/>
<line x1="199.46" y1="530.1" x2="199.46" y2="532.1" stroke="#8a8a8a" stroke-width="0.6"/>
<line x1="203.10" y1="530.1" x2="203.10" y2="533.9" stroke="#8a8a8a" stroke-width="0.6"/>
<line x1="206.74" y1="530.1" x2="206.74" y2="532.1" stroke="#8a8a8a" stroke-width="0.6"/>
<line x1="210.38" y1="530.1" x2="210.38" y2="532.1" stroke="#8a8a8a" stroke-width="0.6"/>
<line x1="214.02" y1="530.1" x2="214.02" y2="532.1" stroke="#8a8a8a" stroke-width="0.6"/>
<line x1="217.66" y1="530.1" x2="217.66" y2="532.1" stroke="#8a8a8a" stroke-width="0.6"/>
<line x1="221.30" y1="530.1" x2="221.30" y2="533.9" stroke="#8a8a8a" stroke-width="0.6"/>
<line x1="224.94" y1="530.1" x2="224.94" y2="532.1" stroke="#8a8a8a" stroke-width="0.6"/>
<line x1="228.58" y1="530.1" x2="228.58" y2="532.1" stroke="#8a8a8a" stroke-width="0.6"/>
<line x1="232.22" y1="530.1" x2="232.22" y2="532.1" stroke="#8a8a8a" stroke-width="0.6"/>
<line x1="235.86" y1="530.1" x2="235.86" y2="532.1" stroke="#8a8a8a" stroke-width="0.6"/>
<line x1="239.50" y1="530.1" x2="239.50" y2="533.9" stroke="#8a8a8a" stroke-width="0.6"/>
<line x1="243.14" y1="530.1" x2="243.14" y2="532.1" stroke="#8a8a8a" stroke-width="0.6"/>
<line x1="246.78" y1="530.1" x2="246.78" y2="532.1" stroke="#8a8a8a" stroke-width="0.6"/>
<line x1="250.42" y1="530.1" x2="250.42" y2="532.1" stroke="#8a8a8a" stroke-width="0.6"/>
<line x1="254.06" y1="530.1" x2="254.06" y2="532.1" stroke="#8a8a8a" stroke-width="0.6"/>
<line x1="257.70" y1="530.1" x2="257.70" y2="533.9" stroke="#8a8a8a" stroke-width="0.6"/>
<line x1="261.34" y1="530.1" x2="261.34" y2="532.1" stroke="#8a8a8a" stroke-width="0.6"/>
<line x1="264.98" y1="530.1" x2="264.98" y2="532.1" stroke="#8a8a8a" stroke-width="0.6"/>
<line x1="268.62" y1="530.1" x2="268.62" y2="532.1" stroke="#8a8a8a" stroke-width="0.6"/>
<line x1="272.26" y1="530.1" x2="272.26" y2="532.1" stroke="#8a8a8a" stroke-width="0.6"/>
<line x1="275.90" y1="530.1" x2="275.90" y2="533.9" stroke="#8a8a8a" stroke-width="0.6"/>
<line x1="279.54" y1="530.1" x2="279.54" y2="532.1" stroke="#8a8a8a" stroke-width="0.6"/>
<line x1="283.18" y1="530.1" x2="283.18" y2="532.1" stroke="#8a8a8a" stroke-width="0.6"/>
<line x1="286.82" y1="530.1" x2="286.82" y2="532.1" stroke="#8a8a8a" stroke-width="0.6"/>
<line x1="290.46" y1="530.1" x2="290.46" y2="532.1" stroke="#8a8a8a" stroke-width="0.6"/>
<line x1="294.10" y1="530.1" x2="294.10" y2="533.9" stroke="#8a8a8a" stroke-width="0.6"/>
<line x1="297.74" y1="530.1" x2="297.74" y2="532.1" stroke="#8a8a8a" stroke-width="0.6"/>
<line x1="301.38" y1="530.1" x2="301.38" y2="532.1" stroke="#8a8a8a" stroke-width="0.6"/>
<line x1="305.02" y1="530.1" x2="305.02" y2="532.1" stroke="#8a8a8a" stroke-width="0.6"/>
<line x1="308.66" y1="530.1" x2="308.66" y2="532.1" stroke="#8a8a8a" stroke-width="0.6"/>
<line x1="312.30" y1="530.1" x2="312.30" y2="533.9" stroke="#8a8a8a" stroke-width="0.6"/>
<line x1="315.94" y1="530.1" x2="315.94" y2="532.1" stroke="#8a8a8a" stroke-width="0.6"/>
<line x1="319.58" y1="530.1" x2="319.58" y2="532.1" stroke="#8a8a8a" stroke-width="0.6"/>
<line x1="323.22" y1="530.1" x2="323.22" y2="532.1" stroke="#8a8a8a" stroke-width="0.6"/>
<line x1="326.86" y1="530.1" x2="326.86" y2="532.1" stroke="#8a8a8a" stroke-width="0.6"/>
<line x1="330.50" y1="530.1" x2="330.50" y2="533.9" stroke="#8a8a8a" stroke-width="0.6"/>
<text x="39.30" y="539.8" font-size="6.6" fill="#3f4fb0" stroke="#3f4fb0" stroke-width="0.12" text-anchor="middle">0</text>
<text x="57.50" y="539.8" font-size="6.6" fill="#3f4fb0" stroke="#3f4fb0" stroke-width="0.12" text-anchor="middle">25</text>
<text x="75.70" y="539.8" font-size="6.6" fill="#3f4fb0" stroke="#3f4fb0" stroke-width="0.12" text-anchor="middle">50</text>
<text x="93.90" y="539.8" font-size="6.6" fill="#3f4fb0" stroke="#3f4fb0" stroke-width="0.12" text-anchor="middle">75</text>
<text x="112.10" y="539.8" font-size="6.6" fill="#3f4fb0" stroke="#3f4fb0" stroke-width="0.12" text-anchor="middle">100</text>
<text x="130.30" y="539.8" font-size="6.6" fill="#3f4fb0" stroke="#3f4fb0" stroke-width="0.12" text-anchor="middle">125</text>
<text x="148.50" y="539.8" font-size="6.6" fill="#3f4fb0" stroke="#3f4fb0" stroke-width="0.12" text-anchor="middle">150</text>
<text x="166.70" y="539.8" font-size="6.6" fill="#3f4fb0" stroke="#3f4fb0" stroke-width="0.12" text-anchor="middle">175</text>
<text x="184.90" y="539.8" font-size="6.6" fill="#3f4fb0" stroke="#3f4fb0" stroke-width="0.12" text-anchor="middle">200</text>
<text x="203.10" y="539.8" font-size="6.6" fill="#3f4fb0" stroke="#3f4fb0" stroke-width="0.12" text-anchor="middle">225</text>
<text x="221.30" y="539.8" font-size="6.6" fill="#3f4fb0" stroke="#3f4fb0" stroke-width="0.12" text-anchor="middle">250</text>
<text x="239.50" y="539.8" font-size="6.6" fill="#3f4fb0" stroke="#3f4fb0" stroke-width="0.12" text-anchor="middle">275</text>
<text x="257.70" y="539.8" font-size="6.6" fill="#3f4fb0" stroke="#3f4fb0" stroke-width="0.12" text-anchor="middle">300</text>
<text x="275.90" y="539.8" font-size="6.6" fill="#3f4fb0" stroke="#3f4fb0" stroke-width="0.12" text-anchor="middle">325</text>
<text x="294.10" y="539.8" font-size="6.6" fill="#3f4fb0" stroke="#3f4fb0" stroke-width="0.12" text-anchor="middle">350</text>
<text x="312.30" y="539.8" font-size="6.6" fill="#3f4fb0" stroke="#3f4fb0" stroke-width="0.12" text-anchor="middle">375</text>
<text x="330.50" y="539.8" font-size="6.6" fill="#3f4fb0" stroke="#3f4fb0" stroke-width="0.12" text-anchor="middle">400</text>
<text x="333.7" y="532.7" font-size="6.55" fill="#3f4fb0" stroke="#3f4fb0" stroke-width="0.12">Conc</text>
<text transform="translate(15.6 480.4) rotate(-90)" font-size="6.6" fill="#3f4fb0" stroke="#3f4fb0" stroke-width="0.12" text-anchor="middle">Response</text>
<line x1="39.3" y1="529.51" x2="330.5" y2="435.04" stroke="#e64444" stroke-width="0.9"/>
<path d="M37.66 527.38 L41.66 531.38 M37.66 531.38 L41.66 527.38" stroke="#ec5a5a" stroke-width="0.65" fill="none"/>
<path d="M38.39 527.18 L42.39 531.18 M38.39 531.18 L42.39 527.18" stroke="#ec5a5a" stroke-width="0.65" fill="none"/>
<path d="M41.67 526.15 L45.67 530.15 M41.67 530.15 L45.67 526.15" stroke="#ec5a5a" stroke-width="0.65" fill="none"/>
<path d="M55.50 521.48 L59.50 525.48 M55.50 525.48 L59.50 521.48" stroke="#ec5a5a" stroke-width="0.65" fill="none"/>
<path d="M110.10 504.02 L114.10 508.02 M110.10 508.02 L114.10 504.02" stroke="#ec5a5a" stroke-width="0.65" fill="none"/>
<path d="M201.10 477.10 L205.10 481.10 M201.10 481.10 L205.10 477.10" stroke="#ec5a5a" stroke-width="0.65" fill="none"/>
<path d="M328.50 430.25 L332.50 434.25 M328.50 434.25 L332.50 430.25" stroke="#ec5a5a" stroke-width="0.65" fill="none"/>
<path d="M112.10 505.11 L113.70 506.71 L112.10 508.31 L110.50 506.71 Z" stroke="#ec5a5a" stroke-width="0.65" fill="none"/>
<path d="M257.70 457.85 L259.30 459.45 L257.70 461.05 L256.10 459.45 Z" stroke="#ec5a5a" stroke-width="0.65" fill="none"/>
<text x="371.5" y="261.10" font-size="6.4" fill="#e64444" stroke="#e64444" stroke-width="0.12">180206_Antibiotika_033 Smooth(SG,3x1)</text>
<text x="371.5" y="269.00" font-size="6.4" fill="#e64444" stroke="#e64444" stroke-width="0.12">0002720456</text>
<text x="681.3" y="261.10" font-size="6.4" fill="#e64444" stroke="#e64444" stroke-width="0.12" text-anchor="end" textLength="76.2" lengthAdjust="spacingAndGlyphs">F5:MRM of 2 channels,ES+</text>
<text x="681.3" y="269.00" font-size="6.4" fill="#e64444" stroke="#e64444" stroke-width="0.12" text-anchor="end">518 &gt; 143</text>
<text x="681.3" y="276.80" font-size="6.4" fill="#e64444" stroke="#e64444" stroke-width="0.12" text-anchor="end">2.949e+007</text>
<line x1="386.6" y1="279.70" x2="386.6" y2="313.60" stroke="#555" stroke-width="0.8"/>
<line x1="384.40" y1="313.60" x2="386.6" y2="313.60" stroke="#555" stroke-width="0.5"/>
<line x1="385.60" y1="310.21" x2="386.6" y2="310.21" stroke="#555" stroke-width="0.5"/>
<line x1="385.60" y1="306.82" x2="386.6" y2="306.82" stroke="#555" stroke-width="0.5"/>
<line x1="385.60" y1="303.43" x2="386.6" y2="303.43" stroke="#555" stroke-width="0.5"/>
<line x1="385.60" y1="300.04" x2="386.6" y2="300.04" stroke="#555" stroke-width="0.5"/>
<line x1="384.40" y1="296.65" x2="386.6" y2="296.65" stroke="#555" stroke-width="0.5"/>
<line x1="385.60" y1="293.26" x2="386.6" y2="293.26" stroke="#555" stroke-width="0.5"/>
<line x1="385.60" y1="289.87" x2="386.6" y2="289.87" stroke="#555" stroke-width="0.5"/>
<line x1="385.60" y1="286.48" x2="386.6" y2="286.48" stroke="#555" stroke-width="0.5"/>
<line x1="385.60" y1="283.09" x2="386.6" y2="283.09" stroke="#555" stroke-width="0.5"/>
<line x1="384.40" y1="279.70" x2="386.6" y2="279.70" stroke="#555" stroke-width="0.5"/>
<text x="383.2" y="281.80" font-size="6.2" fill="#3f4fb0" stroke="#3f4fb0" stroke-width="0.12" text-anchor="end">100</text>
<text x="383.4" y="299.10" font-size="6.8" fill="#3f4fb0" stroke="#3f4fb0" stroke-width="0.12" text-anchor="end">%</text>
<text x="383.2" y="315.70" font-size="6.2" fill="#3f4fb0" stroke="#3f4fb0" stroke-width="0.12" text-anchor="end">0</text>
<line x1="389.74" y1="313.60" x2="389.74" y2="316.80" stroke="#9a9a9a" stroke-width="0.6"/>
<line x1="393.03" y1="313.60" x2="393.03" y2="316.80" stroke="#9a9a9a" stroke-width="0.6"/>
<line x1="396.32" y1="313.60" x2="396.32" y2="316.80" stroke="#9a9a9a" stroke-width="0.6"/>
<line x1="399.61" y1="313.60" x2="399.61" y2="316.80" stroke="#9a9a9a" stroke-width="0.6"/>
<line x1="402.90" y1="313.60" x2="402.90" y2="317.80" stroke="#9a9a9a" stroke-width="0.6"/>
<line x1="406.19" y1="313.60" x2="406.19" y2="316.80" stroke="#9a9a9a" stroke-width="0.6"/>
<line x1="409.48" y1="313.60" x2="409.48" y2="316.80" stroke="#9a9a9a" stroke-width="0.6"/>
<line x1="412.77" y1="313.60" x2="412.77" y2="316.80" stroke="#9a9a9a" stroke-width="0.6"/>
<line x1="416.06" y1="313.60" x2="416.06" y2="316.80" stroke="#9a9a9a" stroke-width="0.6"/>
<line x1="419.35" y1="313.60" x2="419.35" y2="317.80" stroke="#9a9a9a" stroke-width="0.6"/>
<line x1="422.64" y1="313.60" x2="422.64" y2="316.80" stroke="#9a9a9a" stroke-width="0.6"/>
<line x1="425.93" y1="313.60" x2="425.93" y2="316.80" stroke="#9a9a9a" stroke-width="0.6"/>
<line x1="429.22" y1="313.60" x2="429.22" y2="316.80" stroke="#9a9a9a" stroke-width="0.6"/>
<line x1="432.51" y1="313.60" x2="432.51" y2="316.80" stroke="#9a9a9a" stroke-width="0.6"/>
<line x1="435.80" y1="313.60" x2="435.80" y2="317.80" stroke="#9a9a9a" stroke-width="0.6"/>
<line x1="439.09" y1="313.60" x2="439.09" y2="316.80" stroke="#9a9a9a" stroke-width="0.6"/>
<line x1="442.38" y1="313.60" x2="442.38" y2="316.80" stroke="#9a9a9a" stroke-width="0.6"/>
<line x1="445.67" y1="313.60" x2="445.67" y2="316.80" stroke="#9a9a9a" stroke-width="0.6"/>
<line x1="448.96" y1="313.60" x2="448.96" y2="316.80" stroke="#9a9a9a" stroke-width="0.6"/>
<line x1="452.25" y1="313.60" x2="452.25" y2="317.80" stroke="#9a9a9a" stroke-width="0.6"/>
<line x1="455.54" y1="313.60" x2="455.54" y2="316.80" stroke="#9a9a9a" stroke-width="0.6"/>
<line x1="458.83" y1="313.60" x2="458.83" y2="316.80" stroke="#9a9a9a" stroke-width="0.6"/>
<line x1="462.12" y1="313.60" x2="462.12" y2="316.80" stroke="#9a9a9a" stroke-width="0.6"/>
<line x1="465.41" y1="313.60" x2="465.41" y2="316.80" stroke="#9a9a9a" stroke-width="0.6"/>
<line x1="468.70" y1="313.60" x2="468.70" y2="317.80" stroke="#9a9a9a" stroke-width="0.6"/>
<line x1="471.99" y1="313.60" x2="471.99" y2="316.80" stroke="#9a9a9a" stroke-width="0.6"/>
<line x1="475.28" y1="313.60" x2="475.28" y2="316.80" stroke="#9a9a9a" stroke-width="0.6"/>
<line x1="478.57" y1="313.60" x2="478.57" y2="316.80" stroke="#9a9a9a" stroke-width="0.6"/>
<line x1="481.86" y1="313.60" x2="481.86" y2="316.80" stroke="#9a9a9a" stroke-width="0.6"/>
<line x1="485.15" y1="313.60" x2="485.15" y2="317.80" stroke="#9a9a9a" stroke-width="0.6"/>
<line x1="488.44" y1="313.60" x2="488.44" y2="316.80" stroke="#9a9a9a" stroke-width="0.6"/>
<line x1="491.73" y1="313.60" x2="491.73" y2="316.80" stroke="#9a9a9a" stroke-width="0.6"/>
<line x1="495.02" y1="313.60" x2="495.02" y2="316.80" stroke="#9a9a9a" stroke-width="0.6"/>
<line x1="498.31" y1="313.60" x2="498.31" y2="316.80" stroke="#9a9a9a" stroke-width="0.6"/>
<line x1="501.60" y1="313.60" x2="501.60" y2="317.80" stroke="#9a9a9a" stroke-width="0.6"/>
<line x1="504.89" y1="313.60" x2="504.89" y2="316.80" stroke="#9a9a9a" stroke-width="0.6"/>
<line x1="508.18" y1="313.60" x2="508.18" y2="316.80" stroke="#9a9a9a" stroke-width="0.6"/>
<line x1="511.47" y1="313.60" x2="511.47" y2="316.80" stroke="#9a9a9a" stroke-width="0.6"/>
<line x1="514.76" y1="313.60" x2="514.76" y2="316.80" stroke="#9a9a9a" stroke-width="0.6"/>
<line x1="518.05" y1="313.60" x2="518.05" y2="317.80" stroke="#9a9a9a" stroke-width="0.6"/>
<line x1="521.34" y1="313.60" x2="521.34" y2="316.80" stroke="#9a9a9a" stroke-width="0.6"/>
<line x1="524.63" y1="313.60" x2="524.63" y2="316.80" stroke="#9a9a9a" stroke-width="0.6"/>
<line x1="527.92" y1="313.60" x2="527.92" y2="316.80" stroke="#9a9a9a" stroke-width="0.6"/>
<line x1="531.21" y1="313.60" x2="531.21" y2="316.80" stroke="#9a9a9a" stroke-width="0.6"/>
<line x1="534.50" y1="313.60" x2="534.50" y2="317.80" stroke="#9a9a9a" stroke-width="0.6"/>
<line x1="537.79" y1="313.60" x2="537.79" y2="316.80" stroke="#9a9a9a" stroke-width="0.6"/>
<line x1="541.08" y1="313.60" x2="541.08" y2="316.80" stroke="#9a9a9a" stroke-width="0.6"/>
<line x1="544.37" y1="313.60" x2="544.37" y2="316.80" stroke="#9a9a9a" stroke-width="0.6"/>
<line x1="547.66" y1="313.60" x2="547.66" y2="316.80" stroke="#9a9a9a" stroke-width="0.6"/>
<line x1="550.95" y1="313.60" x2="550.95" y2="317.80" stroke="#9a9a9a" stroke-width="0.6"/>
<line x1="554.24" y1="313.60" x2="554.24" y2="316.80" stroke="#9a9a9a" stroke-width="0.6"/>
<line x1="557.53" y1="313.60" x2="557.53" y2="316.80" stroke="#9a9a9a" stroke-width="0.6"/>
<line x1="560.82" y1="313.60" x2="560.82" y2="316.80" stroke="#9a9a9a" stroke-width="0.6"/>
<line x1="564.11" y1="313.60" x2="564.11" y2="316.80" stroke="#9a9a9a" stroke-width="0.6"/>
<line x1="567.40" y1="313.60" x2="567.40" y2="317.80" stroke="#9a9a9a" stroke-width="0.6"/>
<line x1="570.69" y1="313.60" x2="570.69" y2="316.80" stroke="#9a9a9a" stroke-width="0.6"/>
<line x1="573.98" y1="313.60" x2="573.98" y2="316.80" stroke="#9a9a9a" stroke-width="0.6"/>
<line x1="577.27" y1="313.60" x2="577.27" y2="316.80" stroke="#9a9a9a" stroke-width="0.6"/>
<line x1="580.56" y1="313.60" x2="580.56" y2="316.80" stroke="#9a9a9a" stroke-width="0.6"/>
<line x1="583.85" y1="313.60" x2="583.85" y2="317.80" stroke="#9a9a9a" stroke-width="0.6"/>
<line x1="587.14" y1="313.60" x2="587.14" y2="316.80" stroke="#9a9a9a" stroke-width="0.6"/>
<line x1="590.43" y1="313.60" x2="590.43" y2="316.80" stroke="#9a9a9a" stroke-width="0.6"/>
<line x1="593.72" y1="313.60" x2="593.72" y2="316.80" stroke="#9a9a9a" stroke-width="0.6"/>
<line x1="597.01" y1="313.60" x2="597.01" y2="316.80" stroke="#9a9a9a" stroke-width="0.6"/>
<line x1="600.30" y1="313.60" x2="600.30" y2="317.80" stroke="#9a9a9a" stroke-width="0.6"/>
<line x1="603.59" y1="313.60" x2="603.59" y2="316.80" stroke="#9a9a9a" stroke-width="0.6"/>
<line x1="606.88" y1="313.60" x2="606.88" y2="316.80" stroke="#9a9a9a" stroke-width="0.6"/>
<line x1="610.17" y1="313.60" x2="610.17" y2="316.80" stroke="#9a9a9a" stroke-width="0.6"/>
<line x1="613.46" y1="313.60" x2="613.46" y2="316.80" stroke="#9a9a9a" stroke-width="0.6"/>
<line x1="616.75" y1="313.60" x2="616.75" y2="317.80" stroke="#9a9a9a" stroke-width="0.6"/>
<line x1="620.04" y1="313.60" x2="620.04" y2="316.80" stroke="#9a9a9a" stroke-width="0.6"/>
<line x1="623.33" y1="313.60" x2="623.33" y2="316.80" stroke="#9a9a9a" stroke-width="0.6"/>
<line x1="626.62" y1="313.60" x2="626.62" y2="316.80" stroke="#9a9a9a" stroke-width="0.6"/>
<line x1="629.91" y1="313.60" x2="629.91" y2="316.80" stroke="#9a9a9a" stroke-width="0.6"/>
<line x1="633.20" y1="313.60" x2="633.20" y2="317.80" stroke="#9a9a9a" stroke-width="0.6"/>
<line x1="636.49" y1="313.60" x2="636.49" y2="316.80" stroke="#9a9a9a" stroke-width="0.6"/>
<line x1="639.78" y1="313.60" x2="639.78" y2="316.80" stroke="#9a9a9a" stroke-width="0.6"/>
<line x1="643.07" y1="313.60" x2="643.07" y2="316.80" stroke="#9a9a9a" stroke-width="0.6"/>
<line x1="646.36" y1="313.60" x2="646.36" y2="316.80" stroke="#9a9a9a" stroke-width="0.6"/>
<line x1="649.65" y1="313.60" x2="649.65" y2="317.80" stroke="#9a9a9a" stroke-width="0.6"/>
<line x1="652.94" y1="313.60" x2="652.94" y2="316.80" stroke="#9a9a9a" stroke-width="0.6"/>
<line x1="656.23" y1="313.60" x2="656.23" y2="316.80" stroke="#9a9a9a" stroke-width="0.6"/>
<line x1="659.52" y1="313.60" x2="659.52" y2="316.80" stroke="#9a9a9a" stroke-width="0.6"/>
<line x1="662.81" y1="313.60" x2="662.81" y2="316.80" stroke="#9a9a9a" stroke-width="0.6"/>
<line x1="666.10" y1="313.60" x2="666.10" y2="317.80" stroke="#9a9a9a" stroke-width="0.6"/>
<polygon points="407.90,313.26 408.40,313.06 408.90,312.78 409.40,312.37 409.90,311.81 410.40,311.04 410.90,310.03 411.40,308.73 411.90,307.11 412.40,305.15 412.90,302.84 413.40,300.22 413.90,297.34 414.40,294.28 414.90,291.17 415.40,288.16 415.90,285.39 416.40,283.03 416.90,281.22 417.40,280.09 417.90,279.70 418.40,280.03 418.90,281.01 419.40,282.57 419.90,284.64 420.40,287.09 420.90,289.81 421.40,292.67 421.90,295.54 422.40,298.32 422.90,300.93 423.40,303.29 423.90,305.38 424.40,307.17 424.90,308.67 425.40,309.90 425.90,310.87 426.40,311.63 426.90,312.20 427.40,312.63 427.90,312.94 428.40,313.16 428.90,313.31" fill="#62b22e" stroke="#2a3a20" stroke-width="0.7"/>
<line x1="386.6" y1="314.10" x2="666.3" y2="314.10" stroke="#555" stroke-width="0.9"/>
<line x1="386.6" y1="313.30" x2="666.3" y2="313.30" stroke="#e07070" stroke-width="1.0"/>
<line x1="403.3" y1="313.60" x2="434.5" y2="313.60" stroke="#333" stroke-width="0.7"/>
<line x1="403.3" y1="309.60" x2="403.3" y2="313.60" stroke="#333" stroke-width="0.6"/>
<line x1="434.5" y1="309.60" x2="434.5" y2="313.60" stroke="#333" stroke-width="0.6"/>
<line x1="418.50" y1="279.50" x2="422.30" y2="279.50" stroke="#555" stroke-width="0.5"/>
<text x="440.00" y="278.50" font-size="6.4" fill="#4a4c98" stroke="#4a4c98" stroke-width="0.12" text-anchor="middle">Piperacillin</text>
<text x="440.00" y="286.60" font-size="6.4" fill="#4a4c98" stroke="#4a4c98" stroke-width="0.12" text-anchor="middle">2.49</text>
<text x="440.00" y="293.90" font-size="6.4" fill="#4a4c98" stroke="#4a4c98" stroke-width="0.12" text-anchor="middle">1447434.25</text>
<text x="669.70" y="316.50" font-size="6.9" fill="#3f4fb0" stroke="#3f4fb0" stroke-width="0.12">min</text>
<text x="371.5" y="333.00" font-size="6.4" fill="#e64444" stroke="#e64444" stroke-width="0.12">180206_Antibiotika_033 Smooth(SG,3x1)</text>
<text x="371.5" y="340.90" font-size="6.4" fill="#e64444" stroke="#e64444" stroke-width="0.12">0002720456</text>
<text x="681.3" y="333.00" font-size="6.4" fill="#e64444" stroke="#e64444" stroke-width="0.12" text-anchor="end" textLength="76.2" lengthAdjust="spacingAndGlyphs">F5:MRM of 2 channels,ES+</text>
<text x="681.3" y="340.90" font-size="6.4" fill="#e64444" stroke="#e64444" stroke-width="0.12" text-anchor="end">518 &gt; 358.9</text>
<text x="681.3" y="348.70" font-size="6.4" fill="#e64444" stroke="#e64444" stroke-width="0.12" text-anchor="end">1.780e+006</text>
<line x1="386.6" y1="351.60" x2="386.6" y2="385.50" stroke="#555" stroke-width="0.8"/>
<line x1="384.40" y1="385.50" x2="386.6" y2="385.50" stroke="#555" stroke-width="0.5"/>
<line x1="385.60" y1="382.11" x2="386.6" y2="382.11" stroke="#555" stroke-width="0.5"/>
<line x1="385.60" y1="378.72" x2="386.6" y2="378.72" stroke="#555" stroke-width="0.5"/>
<line x1="385.60" y1="375.33" x2="386.6" y2="375.33" stroke="#555" stroke-width="0.5"/>
<line x1="385.60" y1="371.94" x2="386.6" y2="371.94" stroke="#555" stroke-width="0.5"/>
<line x1="384.40" y1="368.55" x2="386.6" y2="368.55" stroke="#555" stroke-width="0.5"/>
<line x1="385.60" y1="365.16" x2="386.6" y2="365.16" stroke="#555" stroke-width="0.5"/>
<line x1="385.60" y1="361.77" x2="386.6" y2="361.77" stroke="#555" stroke-width="0.5"/>
<line x1="385.60" y1="358.38" x2="386.6" y2="358.38" stroke="#555" stroke-width="0.5"/>
<line x1="385.60" y1="354.99" x2="386.6" y2="354.99" stroke="#555" stroke-width="0.5"/>
<line x1="384.40" y1="351.60" x2="386.6" y2="351.60" stroke="#555" stroke-width="0.5"/>
<text x="383.2" y="353.70" font-size="6.2" fill="#3f4fb0" stroke="#3f4fb0" stroke-width="0.12" text-anchor="end">100</text>
<text x="383.4" y="371.00" font-size="6.8" fill="#3f4fb0" stroke="#3f4fb0" stroke-width="0.12" text-anchor="end">%</text>
<text x="383.2" y="387.60" font-size="6.2" fill="#3f4fb0" stroke="#3f4fb0" stroke-width="0.12" text-anchor="end">0</text>
<line x1="389.74" y1="385.50" x2="389.74" y2="388.70" stroke="#9a9a9a" stroke-width="0.6"/>
<line x1="393.03" y1="385.50" x2="393.03" y2="388.70" stroke="#9a9a9a" stroke-width="0.6"/>
<line x1="396.32" y1="385.50" x2="396.32" y2="388.70" stroke="#9a9a9a" stroke-width="0.6"/>
<line x1="399.61" y1="385.50" x2="399.61" y2="388.70" stroke="#9a9a9a" stroke-width="0.6"/>
<line x1="402.90" y1="385.50" x2="402.90" y2="389.70" stroke="#9a9a9a" stroke-width="0.6"/>
<line x1="406.19" y1="385.50" x2="406.19" y2="388.70" stroke="#9a9a9a" stroke-width="0.6"/>
<line x1="409.48" y1="385.50" x2="409.48" y2="388.70" stroke="#9a9a9a" stroke-width="0.6"/>
<line x1="412.77" y1="385.50" x2="412.77" y2="388.70" stroke="#9a9a9a" stroke-width="0.6"/>
<line x1="416.06" y1="385.50" x2="416.06" y2="388.70" stroke="#9a9a9a" stroke-width="0.6"/>
<line x1="419.35" y1="385.50" x2="419.35" y2="389.70" stroke="#9a9a9a" stroke-width="0.6"/>
<line x1="422.64" y1="385.50" x2="422.64" y2="388.70" stroke="#9a9a9a" stroke-width="0.6"/>
<line x1="425.93" y1="385.50" x2="425.93" y2="388.70" stroke="#9a9a9a" stroke-width="0.6"/>
<line x1="429.22" y1="385.50" x2="429.22" y2="388.70" stroke="#9a9a9a" stroke-width="0.6"/>
<line x1="432.51" y1="385.50" x2="432.51" y2="388.70" stroke="#9a9a9a" stroke-width="0.6"/>
<line x1="435.80" y1="385.50" x2="435.80" y2="389.70" stroke="#9a9a9a" stroke-width="0.6"/>
<line x1="439.09" y1="385.50" x2="439.09" y2="388.70" stroke="#9a9a9a" stroke-width="0.6"/>
<line x1="442.38" y1="385.50" x2="442.38" y2="388.70" stroke="#9a9a9a" stroke-width="0.6"/>
<line x1="445.67" y1="385.50" x2="445.67" y2="388.70" stroke="#9a9a9a" stroke-width="0.6"/>
<line x1="448.96" y1="385.50" x2="448.96" y2="388.70" stroke="#9a9a9a" stroke-width="0.6"/>
<line x1="452.25" y1="385.50" x2="452.25" y2="389.70" stroke="#9a9a9a" stroke-width="0.6"/>
<line x1="455.54" y1="385.50" x2="455.54" y2="388.70" stroke="#9a9a9a" stroke-width="0.6"/>
<line x1="458.83" y1="385.50" x2="458.83" y2="388.70" stroke="#9a9a9a" stroke-width="0.6"/>
<line x1="462.12" y1="385.50" x2="462.12" y2="388.70" stroke="#9a9a9a" stroke-width="0.6"/>
<line x1="465.41" y1="385.50" x2="465.41" y2="388.70" stroke="#9a9a9a" stroke-width="0.6"/>
<line x1="468.70" y1="385.50" x2="468.70" y2="389.70" stroke="#9a9a9a" stroke-width="0.6"/>
<line x1="471.99" y1="385.50" x2="471.99" y2="388.70" stroke="#9a9a9a" stroke-width="0.6"/>
<line x1="475.28" y1="385.50" x2="475.28" y2="388.70" stroke="#9a9a9a" stroke-width="0.6"/>
<line x1="478.57" y1="385.50" x2="478.57" y2="388.70" stroke="#9a9a9a" stroke-width="0.6"/>
<line x1="481.86" y1="385.50" x2="481.86" y2="388.70" stroke="#9a9a9a" stroke-width="0.6"/>
<line x1="485.15" y1="385.50" x2="485.15" y2="389.70" stroke="#9a9a9a" stroke-width="0.6"/>
<line x1="488.44" y1="385.50" x2="488.44" y2="388.70" stroke="#9a9a9a" stroke-width="0.6"/>
<line x1="491.73" y1="385.50" x2="491.73" y2="388.70" stroke="#9a9a9a" stroke-width="0.6"/>
<line x1="495.02" y1="385.50" x2="495.02" y2="388.70" stroke="#9a9a9a" stroke-width="0.6"/>
<line x1="498.31" y1="385.50" x2="498.31" y2="388.70" stroke="#9a9a9a" stroke-width="0.6"/>
<line x1="501.60" y1="385.50" x2="501.60" y2="389.70" stroke="#9a9a9a" stroke-width="0.6"/>
<line x1="504.89" y1="385.50" x2="504.89" y2="388.70" stroke="#9a9a9a" stroke-width="0.6"/>
<line x1="508.18" y1="385.50" x2="508.18" y2="388.70" stroke="#9a9a9a" stroke-width="0.6"/>
<line x1="511.47" y1="385.50" x2="511.47" y2="388.70" stroke="#9a9a9a" stroke-width="0.6"/>
<line x1="514.76" y1="385.50" x2="514.76" y2="388.70" stroke="#9a9a9a" stroke-width="0.6"/>
<line x1="518.05" y1="385.50" x2="518.05" y2="389.70" stroke="#9a9a9a" stroke-width="0.6"/>
<line x1="521.34" y1="385.50" x2="521.34" y2="388.70" stroke="#9a9a9a" stroke-width="0.6"/>
<line x1="524.63" y1="385.50" x2="524.63" y2="388.70" stroke="#9a9a9a" stroke-width="0.6"/>
<line x1="527.92" y1="385.50" x2="527.92" y2="388.70" stroke="#9a9a9a" stroke-width="0.6"/>
<line x1="531.21" y1="385.50" x2="531.21" y2="388.70" stroke="#9a9a9a" stroke-width="0.6"/>
<line x1="534.50" y1="385.50" x2="534.50" y2="389.70" stroke="#9a9a9a" stroke-width="0.6"/>
<line x1="537.79" y1="385.50" x2="537.79" y2="388.70" stroke="#9a9a9a" stroke-width="0.6"/>
<line x1="541.08" y1="385.50" x2="541.08" y2="388.70" stroke="#9a9a9a" stroke-width="0.6"/>
<line x1="544.37" y1="385.50" x2="544.37" y2="388.70" stroke="#9a9a9a" stroke-width="0.6"/>
<line x1="547.66" y1="385.50" x2="547.66" y2="388.70" stroke="#9a9a9a" stroke-width="0.6"/>
<line x1="550.95" y1="385.50" x2="550.95" y2="389.70" stroke="#9a9a9a" stroke-width="0.6"/>
<line x1="554.24" y1="385.50" x2="554.24" y2="388.70" stroke="#9a9a9a" stroke-width="0.6"/>
<line x1="557.53" y1="385.50" x2="557.53" y2="388.70" stroke="#9a9a9a" stroke-width="0.6"/>
<line x1="560.82" y1="385.50" x2="560.82" y2="388.70" stroke="#9a9a9a" stroke-width="0.6"/>
<line x1="564.11" y1="385.50" x2="564.11" y2="388.70" stroke="#9a9a9a" stroke-width="0.6"/>
<line x1="567.40" y1="385.50" x2="567.40" y2="389.70" stroke="#9a9a9a" stroke-width="0.6"/>
<line x1="570.69" y1="385.50" x2="570.69" y2="388.70" stroke="#9a9a9a" stroke-width="0.6"/>
<line x1="573.98" y1="385.50" x2="573.98" y2="388.70" stroke="#9a9a9a" stroke-width="0.6"/>
<line x1="577.27" y1="385.50" x2="577.27" y2="388.70" stroke="#9a9a9a" stroke-width="0.6"/>
<line x1="580.56" y1="385.50" x2="580.56" y2="388.70" stroke="#9a9a9a" stroke-width="0.6"/>
<line x1="583.85" y1="385.50" x2="583.85" y2="389.70" stroke="#9a9a9a" stroke-width="0.6"/>
<line x1="587.14" y1="385.50" x2="587.14" y2="388.70" stroke="#9a9a9a" stroke-width="0.6"/>
<line x1="590.43" y1="385.50" x2="590.43" y2="388.70" stroke="#9a9a9a" stroke-width="0.6"/>
<line x1="593.72" y1="385.50" x2="593.72" y2="388.70" stroke="#9a9a9a" stroke-width="0.6"/>
<line x1="597.01" y1="385.50" x2="597.01" y2="388.70" stroke="#9a9a9a" stroke-width="0.6"/>
<line x1="600.30" y1="385.50" x2="600.30" y2="389.70" stroke="#9a9a9a" stroke-width="0.6"/>
<line x1="603.59" y1="385.50" x2="603.59" y2="388.70" stroke="#9a9a9a" stroke-width="0.6"/>
<line x1="606.88" y1="385.50" x2="606.88" y2="388.70" stroke="#9a9a9a" stroke-width="0.6"/>
<line x1="610.17" y1="385.50" x2="610.17" y2="388.70" stroke="#9a9a9a" stroke-width="0.6"/>
<line x1="613.46" y1="385.50" x2="613.46" y2="388.70" stroke="#9a9a9a" stroke-width="0.6"/>
<line x1="616.75" y1="385.50" x2="616.75" y2="389.70" stroke="#9a9a9a" stroke-width="0.6"/>
<line x1="620.04" y1="385.50" x2="620.04" y2="388.70" stroke="#9a9a9a" stroke-width="0.6"/>
<line x1="623.33" y1="385.50" x2="623.33" y2="388.70" stroke="#9a9a9a" stroke-width="0.6"/>
<line x1="626.62" y1="385.50" x2="626.62" y2="388.70" stroke="#9a9a9a" stroke-width="0.6"/>
<line x1="629.91" y1="385.50" x2="629.91" y2="388.70" stroke="#9a9a9a" stroke-width="0.6"/>
<line x1="633.20" y1="385.50" x2="633.20" y2="389.70" stroke="#9a9a9a" stroke-width="0.6"/>
<line x1="636.49" y1="385.50" x2="636.49" y2="388.70" stroke="#9a9a9a" stroke-width="0.6"/>
<line x1="639.78" y1="385.50" x2="639.78" y2="388.70" stroke="#9a9a9a" stroke-width="0.6"/>
<line x1="643.07" y1="385.50" x2="643.07" y2="388.70" stroke="#9a9a9a" stroke-width="0.6"/>
<line x1="646.36" y1="385.50" x2="646.36" y2="388.70" stroke="#9a9a9a" stroke-width="0.6"/>
<line x1="649.65" y1="385.50" x2="649.65" y2="389.70" stroke="#9a9a9a" stroke-width="0.6"/>
<line x1="652.94" y1="385.50" x2="652.94" y2="388.70" stroke="#9a9a9a" stroke-width="0.6"/>
<line x1="656.23" y1="385.50" x2="656.23" y2="388.70" stroke="#9a9a9a" stroke-width="0.6"/>
<line x1="659.52" y1="385.50" x2="659.52" y2="388.70" stroke="#9a9a9a" stroke-width="0.6"/>
<line x1="662.81" y1="385.50" x2="662.81" y2="388.70" stroke="#9a9a9a" stroke-width="0.6"/>
<line x1="666.10" y1="385.50" x2="666.10" y2="389.70" stroke="#9a9a9a" stroke-width="0.6"/>
<polygon points="407.90,385.16 408.40,384.96 408.90,384.68 409.40,384.27 409.90,383.71 410.40,382.94 410.90,381.93 411.40,380.63 411.90,379.01 412.40,377.05 412.90,374.74 413.40,372.12 413.90,369.24 414.40,366.18 414.90,363.07 415.40,360.06 415.90,357.29 416.40,354.93 416.90,353.12 417.40,351.99 417.90,351.60 418.40,351.93 418.90,352.91 419.40,354.47 419.90,356.54 420.40,358.99 420.90,361.71 421.40,364.57 421.90,367.44 422.40,370.22 422.90,372.83 423.40,375.19 423.90,377.28 424.40,379.07 424.90,380.57 425.40,381.80 425.90,382.77 426.40,383.53 426.90,384.10 427.40,384.53 427.90,384.84 428.40,385.06 428.90,385.21" fill="#62b22e" stroke="#2a3a20" stroke-width="0.7"/>
<line x1="386.6" y1="386.00" x2="666.3" y2="386.00" stroke="#555" stroke-width="0.9"/>
<line x1="386.6" y1="385.20" x2="666.3" y2="385.20" stroke="#e07070" stroke-width="1.0"/>
<line x1="402.0" y1="385.50" x2="431.5" y2="385.50" stroke="#333" stroke-width="0.7"/>
<line x1="402.0" y1="381.50" x2="402.0" y2="385.50" stroke="#333" stroke-width="0.6"/>
<line x1="431.5" y1="381.50" x2="431.5" y2="385.50" stroke="#333" stroke-width="0.6"/>
<line x1="418.50" y1="351.40" x2="422.30" y2="351.40" stroke="#555" stroke-width="0.5"/>
<text x="437.80" y="350.40" font-size="6.4" fill="#4a4c98" stroke="#4a4c98" stroke-width="0.12" text-anchor="middle">Piperacillin</text>
<text x="437.80" y="358.50" font-size="6.4" fill="#4a4c98" stroke="#4a4c98" stroke-width="0.12" text-anchor="middle">2.49</text>
<text x="437.80" y="365.80" font-size="6.4" fill="#4a4c98" stroke="#4a4c98" stroke-width="0.12" text-anchor="middle">78217.89</text>
<text x="669.70" y="388.40" font-size="6.9" fill="#3f4fb0" stroke="#3f4fb0" stroke-width="0.12">min</text>
<text x="371.5" y="404.90" font-size="6.4" fill="#e64444" stroke="#e64444" stroke-width="0.12">180206_Antibiotika_033 Smooth(SG,3x1)</text>
<text x="371.5" y="412.80" font-size="6.4" fill="#e64444" stroke="#e64444" stroke-width="0.12">0002720456</text>
<text x="681.3" y="404.90" font-size="6.4" fill="#e64444" stroke="#e64444" stroke-width="0.12" text-anchor="end" textLength="76.2" lengthAdjust="spacingAndGlyphs">F6:MRM of 2 channels,ES+</text>
<text x="681.3" y="412.80" font-size="6.4" fill="#e64444" stroke="#e64444" stroke-width="0.12" text-anchor="end">523.1 &gt; 148.2</text>
<text x="681.3" y="420.60" font-size="6.4" fill="#e64444" stroke="#e64444" stroke-width="0.12" text-anchor="end">1.880e+006</text>
<line x1="386.6" y1="423.50" x2="386.6" y2="457.40" stroke="#555" stroke-width="0.8"/>
<line x1="384.40" y1="457.40" x2="386.6" y2="457.40" stroke="#555" stroke-width="0.5"/>
<line x1="385.60" y1="454.01" x2="386.6" y2="454.01" stroke="#555" stroke-width="0.5"/>
<line x1="385.60" y1="450.62" x2="386.6" y2="450.62" stroke="#555" stroke-width="0.5"/>
<line x1="385.60" y1="447.23" x2="386.6" y2="447.23" stroke="#555" stroke-width="0.5"/>
<line x1="385.60" y1="443.84" x2="386.6" y2="443.84" stroke="#555" stroke-width="0.5"/>
<line x1="384.40" y1="440.45" x2="386.6" y2="440.45" stroke="#555" stroke-width="0.5"/>
<line x1="385.60" y1="437.06" x2="386.6" y2="437.06" stroke="#555" stroke-width="0.5"/>
<line x1="385.60" y1="433.67" x2="386.6" y2="433.67" stroke="#555" stroke-width="0.5"/>
<line x1="385.60" y1="430.28" x2="386.6" y2="430.28" stroke="#555" stroke-width="0.5"/>
<line x1="385.60" y1="426.89" x2="386.6" y2="426.89" stroke="#555" stroke-width="0.5"/>
<line x1="384.40" y1="423.50" x2="386.6" y2="423.50" stroke="#555" stroke-width="0.5"/>
<text x="383.2" y="425.60" font-size="6.2" fill="#3f4fb0" stroke="#3f4fb0" stroke-width="0.12" text-anchor="end">100</text>
<text x="383.4" y="442.90" font-size="6.8" fill="#3f4fb0" stroke="#3f4fb0" stroke-width="0.12" text-anchor="end">%</text>
<text x="383.2" y="459.50" font-size="6.2" fill="#3f4fb0" stroke="#3f4fb0" stroke-width="0.12" text-anchor="end">0</text>
<line x1="389.74" y1="457.40" x2="389.74" y2="460.60" stroke="#9a9a9a" stroke-width="0.6"/>
<line x1="393.03" y1="457.40" x2="393.03" y2="460.60" stroke="#9a9a9a" stroke-width="0.6"/>
<line x1="396.32" y1="457.40" x2="396.32" y2="460.60" stroke="#9a9a9a" stroke-width="0.6"/>
<line x1="399.61" y1="457.40" x2="399.61" y2="460.60" stroke="#9a9a9a" stroke-width="0.6"/>
<line x1="402.90" y1="457.40" x2="402.90" y2="461.60" stroke="#9a9a9a" stroke-width="0.6"/>
<line x1="406.19" y1="457.40" x2="406.19" y2="460.60" stroke="#9a9a9a" stroke-width="0.6"/>
<line x1="409.48" y1="457.40" x2="409.48" y2="460.60" stroke="#9a9a9a" stroke-width="0.6"/>
<line x1="412.77" y1="457.40" x2="412.77" y2="460.60" stroke="#9a9a9a" stroke-width="0.6"/>
<line x1="416.06" y1="457.40" x2="416.06" y2="460.60" stroke="#9a9a9a" stroke-width="0.6"/>
<line x1="419.35" y1="457.40" x2="419.35" y2="461.60" stroke="#9a9a9a" stroke-width="0.6"/>
<line x1="422.64" y1="457.40" x2="422.64" y2="460.60" stroke="#9a9a9a" stroke-width="0.6"/>
<line x1="425.93" y1="457.40" x2="425.93" y2="460.60" stroke="#9a9a9a" stroke-width="0.6"/>
<line x1="429.22" y1="457.40" x2="429.22" y2="460.60" stroke="#9a9a9a" stroke-width="0.6"/>
<line x1="432.51" y1="457.40" x2="432.51" y2="460.60" stroke="#9a9a9a" stroke-width="0.6"/>
<line x1="435.80" y1="457.40" x2="435.80" y2="461.60" stroke="#9a9a9a" stroke-width="0.6"/>
<line x1="439.09" y1="457.40" x2="439.09" y2="460.60" stroke="#9a9a9a" stroke-width="0.6"/>
<line x1="442.38" y1="457.40" x2="442.38" y2="460.60" stroke="#9a9a9a" stroke-width="0.6"/>
<line x1="445.67" y1="457.40" x2="445.67" y2="460.60" stroke="#9a9a9a" stroke-width="0.6"/>
<line x1="448.96" y1="457.40" x2="448.96" y2="460.60" stroke="#9a9a9a" stroke-width="0.6"/>
<line x1="452.25" y1="457.40" x2="452.25" y2="461.60" stroke="#9a9a9a" stroke-width="0.6"/>
<line x1="455.54" y1="457.40" x2="455.54" y2="460.60" stroke="#9a9a9a" stroke-width="0.6"/>
<line x1="458.83" y1="457.40" x2="458.83" y2="460.60" stroke="#9a9a9a" stroke-width="0.6"/>
<line x1="462.12" y1="457.40" x2="462.12" y2="460.60" stroke="#9a9a9a" stroke-width="0.6"/>
<line x1="465.41" y1="457.40" x2="465.41" y2="460.60" stroke="#9a9a9a" stroke-width="0.6"/>
<line x1="468.70" y1="457.40" x2="468.70" y2="461.60" stroke="#9a9a9a" stroke-width="0.6"/>
<line x1="471.99" y1="457.40" x2="471.99" y2="460.60" stroke="#9a9a9a" stroke-width="0.6"/>
<line x1="475.28" y1="457.40" x2="475.28" y2="460.60" stroke="#9a9a9a" stroke-width="0.6"/>
<line x1="478.57" y1="457.40" x2="478.57" y2="460.60" stroke="#9a9a9a" stroke-width="0.6"/>
<line x1="481.86" y1="457.40" x2="481.86" y2="460.60" stroke="#9a9a9a" stroke-width="0.6"/>
<line x1="485.15" y1="457.40" x2="485.15" y2="461.60" stroke="#9a9a9a" stroke-width="0.6"/>
<line x1="488.44" y1="457.40" x2="488.44" y2="460.60" stroke="#9a9a9a" stroke-width="0.6"/>
<line x1="491.73" y1="457.40" x2="491.73" y2="460.60" stroke="#9a9a9a" stroke-width="0.6"/>
<line x1="495.02" y1="457.40" x2="495.02" y2="460.60" stroke="#9a9a9a" stroke-width="0.6"/>
<line x1="498.31" y1="457.40" x2="498.31" y2="460.60" stroke="#9a9a9a" stroke-width="0.6"/>
<line x1="501.60" y1="457.40" x2="501.60" y2="461.60" stroke="#9a9a9a" stroke-width="0.6"/>
<line x1="504.89" y1="457.40" x2="504.89" y2="460.60" stroke="#9a9a9a" stroke-width="0.6"/>
<line x1="508.18" y1="457.40" x2="508.18" y2="460.60" stroke="#9a9a9a" stroke-width="0.6"/>
<line x1="511.47" y1="457.40" x2="511.47" y2="460.60" stroke="#9a9a9a" stroke-width="0.6"/>
<line x1="514.76" y1="457.40" x2="514.76" y2="460.60" stroke="#9a9a9a" stroke-width="0.6"/>
<line x1="518.05" y1="457.40" x2="518.05" y2="461.60" stroke="#9a9a9a" stroke-width="0.6"/>
<line x1="521.34" y1="457.40" x2="521.34" y2="460.60" stroke="#9a9a9a" stroke-width="0.6"/>
<line x1="524.63" y1="457.40" x2="524.63" y2="460.60" stroke="#9a9a9a" stroke-width="0.6"/>
<line x1="527.92" y1="457.40" x2="527.92" y2="460.60" stroke="#9a9a9a" stroke-width="0.6"/>
<line x1="531.21" y1="457.40" x2="531.21" y2="460.60" stroke="#9a9a9a" stroke-width="0.6"/>
<line x1="534.50" y1="457.40" x2="534.50" y2="461.60" stroke="#9a9a9a" stroke-width="0.6"/>
<line x1="537.79" y1="457.40" x2="537.79" y2="460.60" stroke="#9a9a9a" stroke-width="0.6"/>
<line x1="541.08" y1="457.40" x2="541.08" y2="460.60" stroke="#9a9a9a" stroke-width="0.6"/>
<line x1="544.37" y1="457.40" x2="544.37" y2="460.60" stroke="#9a9a9a" stroke-width="0.6"/>
<line x1="547.66" y1="457.40" x2="547.66" y2="460.60" stroke="#9a9a9a" stroke-width="0.6"/>
<line x1="550.95" y1="457.40" x2="550.95" y2="461.60" stroke="#9a9a9a" stroke-width="0.6"/>
<line x1="554.24" y1="457.40" x2="554.24" y2="460.60" stroke="#9a9a9a" stroke-width="0.6"/>
<line x1="557.53" y1="457.40" x2="557.53" y2="460.60" stroke="#9a9a9a" stroke-width="0.6"/>
<line x1="560.82" y1="457.40" x2="560.82" y2="460.60" stroke="#9a9a9a" stroke-width="0.6"/>
<line x1="564.11" y1="457.40" x2="564.11" y2="460.60" stroke="#9a9a9a" stroke-width="0.6"/>
<line x1="567.40" y1="457.40" x2="567.40" y2="461.60" stroke="#9a9a9a" stroke-width="0.6"/>
<line x1="570.69" y1="457.40" x2="570.69" y2="460.60" stroke="#9a9a9a" stroke-width="0.6"/>
<line x1="573.98" y1="457.40" x2="573.98" y2="460.60" stroke="#9a9a9a" stroke-width="0.6"/>
<line x1="577.27" y1="457.40" x2="577.27" y2="460.60" stroke="#9a9a9a" stroke-width="0.6"/>
<line x1="580.56" y1="457.40" x2="580.56" y2="460.60" stroke="#9a9a9a" stroke-width="0.6"/>
<line x1="583.85" y1="457.40" x2="583.85" y2="461.60" stroke="#9a9a9a" stroke-width="0.6"/>
<line x1="587.14" y1="457.40" x2="587.14" y2="460.60" stroke="#9a9a9a" stroke-width="0.6"/>
<line x1="590.43" y1="457.40" x2="590.43" y2="460.60" stroke="#9a9a9a" stroke-width="0.6"/>
<line x1="593.72" y1="457.40" x2="593.72" y2="460.60" stroke="#9a9a9a" stroke-width="0.6"/>
<line x1="597.01" y1="457.40" x2="597.01" y2="460.60" stroke="#9a9a9a" stroke-width="0.6"/>
<line x1="600.30" y1="457.40" x2="600.30" y2="461.60" stroke="#9a9a9a" stroke-width="0.6"/>
<line x1="603.59" y1="457.40" x2="603.59" y2="460.60" stroke="#9a9a9a" stroke-width="0.6"/>
<line x1="606.88" y1="457.40" x2="606.88" y2="460.60" stroke="#9a9a9a" stroke-width="0.6"/>
<line x1="610.17" y1="457.40" x2="610.17" y2="460.60" stroke="#9a9a9a" stroke-width="0.6"/>
<line x1="613.46" y1="457.40" x2="613.46" y2="460.60" stroke="#9a9a9a" stroke-width="0.6"/>
<line x1="616.75" y1="457.40" x2="616.75" y2="461.60" stroke="#9a9a9a" stroke-width="0.6"/>
<line x1="620.04" y1="457.40" x2="620.04" y2="460.60" stroke="#9a9a9a" stroke-width="0.6"/>
<line x1="623.33" y1="457.40" x2="623.33" y2="460.60" stroke="#9a9a9a" stroke-width="0.6"/>
<line x1="626.62" y1="457.40" x2="626.62" y2="460.60" stroke="#9a9a9a" stroke-width="0.6"/>
<line x1="629.91" y1="457.40" x2="629.91" y2="460.60" stroke="#9a9a9a" stroke-width="0.6"/>
<line x1="633.20" y1="457.40" x2="633.20" y2="461.60" stroke="#9a9a9a" stroke-width="0.6"/>
<line x1="636.49" y1="457.40" x2="636.49" y2="460.60" stroke="#9a9a9a" stroke-width="0.6"/>
<line x1="639.78" y1="457.40" x2="639.78" y2="460.60" stroke="#9a9a9a" stroke-width="0.6"/>
<line x1="643.07" y1="457.40" x2="643.07" y2="460.60" stroke="#9a9a9a" stroke-width="0.6"/>
<line x1="646.36" y1="457.40" x2="646.36" y2="460.60" stroke="#9a9a9a" stroke-width="0.6"/>
<line x1="649.65" y1="457.40" x2="649.65" y2="461.60" stroke="#9a9a9a" stroke-width="0.6"/>
<line x1="652.94" y1="457.40" x2="652.94" y2="460.60" stroke="#9a9a9a" stroke-width="0.6"/>
<line x1="656.23" y1="457.40" x2="656.23" y2="460.60" stroke="#9a9a9a" stroke-width="0.6"/>
<line x1="659.52" y1="457.40" x2="659.52" y2="460.60" stroke="#9a9a9a" stroke-width="0.6"/>
<line x1="662.81" y1="457.40" x2="662.81" y2="460.60" stroke="#9a9a9a" stroke-width="0.6"/>
<line x1="666.10" y1="457.40" x2="666.10" y2="461.60" stroke="#9a9a9a" stroke-width="0.6"/>
<polygon points="407.90,457.06 408.40,456.86 408.90,456.58 409.40,456.17 409.90,455.61 410.40,454.84 410.90,453.83 411.40,452.53 411.90,450.91 412.40,448.95 412.90,446.64 413.40,444.02 413.90,441.14 414.40,438.08 414.90,434.97 415.40,431.96 415.90,429.19 416.40,426.83 416.90,425.02 417.40,423.89 417.90,423.50 418.40,423.83 418.90,424.81 419.40,426.37 419.90,428.44 420.40,430.89 420.90,433.61 421.40,436.47 421.90,439.34 422.40,442.12 422.90,444.73 423.40,447.09 423.90,449.18 424.40,450.97 424.90,452.47 425.40,453.70 425.90,454.67 426.40,455.43 426.90,456.00 427.40,456.43 427.90,456.74 428.40,456.96 428.90,457.11" fill="#62b22e" stroke="#2a3a20" stroke-width="0.7"/>
<line x1="386.6" y1="457.90" x2="666.3" y2="457.90" stroke="#555" stroke-width="0.9"/>
<line x1="386.6" y1="457.10" x2="666.3" y2="457.10" stroke="#e07070" stroke-width="1.0"/>
<line x1="406.6" y1="457.40" x2="440.8" y2="457.40" stroke="#333" stroke-width="0.7"/>
<line x1="406.6" y1="453.40" x2="406.6" y2="457.40" stroke="#333" stroke-width="0.6"/>
<line x1="440.8" y1="453.40" x2="440.8" y2="457.40" stroke="#333" stroke-width="0.6"/>
<line x1="418.50" y1="423.30" x2="422.30" y2="423.30" stroke="#555" stroke-width="0.5"/>
<text x="443.20" y="422.30" font-size="6.4" fill="#4a4c98" stroke="#4a4c98" stroke-width="0.12" text-anchor="middle">Piperacillin D5</text>
<text x="443.20" y="430.40" font-size="6.4" fill="#4a4c98" stroke="#4a4c98" stroke-width="0.12" text-anchor="middle">2.49</text>
<text x="443.20" y="437.70" font-size="6.4" fill="#4a4c98" stroke="#4a4c98" stroke-width="0.12" text-anchor="middle">91941.31</text>
<text x="669.70" y="460.30" font-size="6.9" fill="#3f4fb0" stroke="#3f4fb0" stroke-width="0.12">min</text>
<text x="371.5" y="476.90" font-size="6.4" fill="#e64444" stroke="#e64444" stroke-width="0.12">180206_Antibiotika_033 Smooth(SG,3x1)</text>
<text x="371.5" y="484.80" font-size="6.4" fill="#e64444" stroke="#e64444" stroke-width="0.12">0002720456</text>
<text x="681.3" y="476.90" font-size="6.4" fill="#e64444" stroke="#e64444" stroke-width="0.12" text-anchor="end" textLength="76.2" lengthAdjust="spacingAndGlyphs">F6:MRM of 2 channels,ES+</text>
<text x="681.3" y="484.80" font-size="6.4" fill="#e64444" stroke="#e64444" stroke-width="0.12" text-anchor="end">523.1 &gt; 364.1</text>
<text x="681.3" y="492.60" font-size="6.4" fill="#e64444" stroke="#e64444" stroke-width="0.12" text-anchor="end">1.137e+005</text>
<line x1="386.6" y1="495.50" x2="386.6" y2="529.40" stroke="#555" stroke-width="0.8"/>
<line x1="384.40" y1="529.40" x2="386.6" y2="529.40" stroke="#555" stroke-width="0.5"/>
<line x1="385.60" y1="526.01" x2="386.6" y2="526.01" stroke="#555" stroke-width="0.5"/>
<line x1="385.60" y1="522.62" x2="386.6" y2="522.62" stroke="#555" stroke-width="0.5"/>
<line x1="385.60" y1="519.23" x2="386.6" y2="519.23" stroke="#555" stroke-width="0.5"/>
<line x1="385.60" y1="515.84" x2="386.6" y2="515.84" stroke="#555" stroke-width="0.5"/>
<line x1="384.40" y1="512.45" x2="386.6" y2="512.45" stroke="#555" stroke-width="0.5"/>
<line x1="385.60" y1="509.06" x2="386.6" y2="509.06" stroke="#555" stroke-width="0.5"/>
<line x1="385.60" y1="505.67" x2="386.6" y2="505.67" stroke="#555" stroke-width="0.5"/>
<line x1="385.60" y1="502.28" x2="386.6" y2="502.28" stroke="#555" stroke-width="0.5"/>
<line x1="385.60" y1="498.89" x2="386.6" y2="498.89" stroke="#555" stroke-width="0.5"/>
<line x1="384.40" y1="495.50" x2="386.6" y2="495.50" stroke="#555" stroke-width="0.5"/>
<text x="383.2" y="497.60" font-size="6.2" fill="#3f4fb0" stroke="#3f4fb0" stroke-width="0.12" text-anchor="end">100</text>
<text x="383.4" y="514.90" font-size="6.8" fill="#3f4fb0" stroke="#3f4fb0" stroke-width="0.12" text-anchor="end">%</text>
<text x="383.2" y="531.50" font-size="6.2" fill="#3f4fb0" stroke="#3f4fb0" stroke-width="0.12" text-anchor="end">0</text>
<line x1="389.74" y1="529.40" x2="389.74" y2="532.60" stroke="#9a9a9a" stroke-width="0.6"/>
<line x1="393.03" y1="529.40" x2="393.03" y2="532.60" stroke="#9a9a9a" stroke-width="0.6"/>
<line x1="396.32" y1="529.40" x2="396.32" y2="532.60" stroke="#9a9a9a" stroke-width="0.6"/>
<line x1="399.61" y1="529.40" x2="399.61" y2="532.60" stroke="#9a9a9a" stroke-width="0.6"/>
<line x1="402.90" y1="529.40" x2="402.90" y2="533.60" stroke="#9a9a9a" stroke-width="0.6"/>
<line x1="406.19" y1="529.40" x2="406.19" y2="532.60" stroke="#9a9a9a" stroke-width="0.6"/>
<line x1="409.48" y1="529.40" x2="409.48" y2="532.60" stroke="#9a9a9a" stroke-width="0.6"/>
<line x1="412.77" y1="529.40" x2="412.77" y2="532.60" stroke="#9a9a9a" stroke-width="0.6"/>
<line x1="416.06" y1="529.40" x2="416.06" y2="532.60" stroke="#9a9a9a" stroke-width="0.6"/>
<line x1="419.35" y1="529.40" x2="419.35" y2="533.60" stroke="#9a9a9a" stroke-width="0.6"/>
<line x1="422.64" y1="529.40" x2="422.64" y2="532.60" stroke="#9a9a9a" stroke-width="0.6"/>
<line x1="425.93" y1="529.40" x2="425.93" y2="532.60" stroke="#9a9a9a" stroke-width="0.6"/>
<line x1="429.22" y1="529.40" x2="429.22" y2="532.60" stroke="#9a9a9a" stroke-width="0.6"/>
<line x1="432.51" y1="529.40" x2="432.51" y2="532.60" stroke="#9a9a9a" stroke-width="0.6"/>
<line x1="435.80" y1="529.40" x2="435.80" y2="533.60" stroke="#9a9a9a" stroke-width="0.6"/>
<line x1="439.09" y1="529.40" x2="439.09" y2="532.60" stroke="#9a9a9a" stroke-width="0.6"/>
<line x1="442.38" y1="529.40" x2="442.38" y2="532.60" stroke="#9a9a9a" stroke-width="0.6"/>
<line x1="445.67" y1="529.40" x2="445.67" y2="532.60" stroke="#9a9a9a" stroke-width="0.6"/>
<line x1="448.96" y1="529.40" x2="448.96" y2="532.60" stroke="#9a9a9a" stroke-width="0.6"/>
<line x1="452.25" y1="529.40" x2="452.25" y2="533.60" stroke="#9a9a9a" stroke-width="0.6"/>
<line x1="455.54" y1="529.40" x2="455.54" y2="532.60" stroke="#9a9a9a" stroke-width="0.6"/>
<line x1="458.83" y1="529.40" x2="458.83" y2="532.60" stroke="#9a9a9a" stroke-width="0.6"/>
<line x1="462.12" y1="529.40" x2="462.12" y2="532.60" stroke="#9a9a9a" stroke-width="0.6"/>
<line x1="465.41" y1="529.40" x2="465.41" y2="532.60" stroke="#9a9a9a" stroke-width="0.6"/>
<line x1="468.70" y1="529.40" x2="468.70" y2="533.60" stroke="#9a9a9a" stroke-width="0.6"/>
<line x1="471.99" y1="529.40" x2="471.99" y2="532.60" stroke="#9a9a9a" stroke-width="0.6"/>
<line x1="475.28" y1="529.40" x2="475.28" y2="532.60" stroke="#9a9a9a" stroke-width="0.6"/>
<line x1="478.57" y1="529.40" x2="478.57" y2="532.60" stroke="#9a9a9a" stroke-width="0.6"/>
<line x1="481.86" y1="529.40" x2="481.86" y2="532.60" stroke="#9a9a9a" stroke-width="0.6"/>
<line x1="485.15" y1="529.40" x2="485.15" y2="533.60" stroke="#9a9a9a" stroke-width="0.6"/>
<line x1="488.44" y1="529.40" x2="488.44" y2="532.60" stroke="#9a9a9a" stroke-width="0.6"/>
<line x1="491.73" y1="529.40" x2="491.73" y2="532.60" stroke="#9a9a9a" stroke-width="0.6"/>
<line x1="495.02" y1="529.40" x2="495.02" y2="532.60" stroke="#9a9a9a" stroke-width="0.6"/>
<line x1="498.31" y1="529.40" x2="498.31" y2="532.60" stroke="#9a9a9a" stroke-width="0.6"/>
<line x1="501.60" y1="529.40" x2="501.60" y2="533.60" stroke="#9a9a9a" stroke-width="0.6"/>
<line x1="504.89" y1="529.40" x2="504.89" y2="532.60" stroke="#9a9a9a" stroke-width="0.6"/>
<line x1="508.18" y1="529.40" x2="508.18" y2="532.60" stroke="#9a9a9a" stroke-width="0.6"/>
<line x1="511.47" y1="529.40" x2="511.47" y2="532.60" stroke="#9a9a9a" stroke-width="0.6"/>
<line x1="514.76" y1="529.40" x2="514.76" y2="532.60" stroke="#9a9a9a" stroke-width="0.6"/>
<line x1="518.05" y1="529.40" x2="518.05" y2="533.60" stroke="#9a9a9a" stroke-width="0.6"/>
<line x1="521.34" y1="529.40" x2="521.34" y2="532.60" stroke="#9a9a9a" stroke-width="0.6"/>
<line x1="524.63" y1="529.40" x2="524.63" y2="532.60" stroke="#9a9a9a" stroke-width="0.6"/>
<line x1="527.92" y1="529.40" x2="527.92" y2="532.60" stroke="#9a9a9a" stroke-width="0.6"/>
<line x1="531.21" y1="529.40" x2="531.21" y2="532.60" stroke="#9a9a9a" stroke-width="0.6"/>
<line x1="534.50" y1="529.40" x2="534.50" y2="533.60" stroke="#9a9a9a" stroke-width="0.6"/>
<line x1="537.79" y1="529.40" x2="537.79" y2="532.60" stroke="#9a9a9a" stroke-width="0.6"/>
<line x1="541.08" y1="529.40" x2="541.08" y2="532.60" stroke="#9a9a9a" stroke-width="0.6"/>
<line x1="544.37" y1="529.40" x2="544.37" y2="532.60" stroke="#9a9a9a" stroke-width="0.6"/>
<line x1="547.66" y1="529.40" x2="547.66" y2="532.60" stroke="#9a9a9a" stroke-width="0.6"/>
<line x1="550.95" y1="529.40" x2="550.95" y2="533.60" stroke="#9a9a9a" stroke-width="0.6"/>
<line x1="554.24" y1="529.40" x2="554.24" y2="532.60" stroke="#9a9a9a" stroke-width="0.6"/>
<line x1="557.53" y1="529.40" x2="557.53" y2="532.60" stroke="#9a9a9a" stroke-width="0.6"/>
<line x1="560.82" y1="529.40" x2="560.82" y2="532.60" stroke="#9a9a9a" stroke-width="0.6"/>
<line x1="564.11" y1="529.40" x2="564.11" y2="532.60" stroke="#9a9a9a" stroke-width="0.6"/>
<line x1="567.40" y1="529.40" x2="567.40" y2="533.60" stroke="#9a9a9a" stroke-width="0.6"/>
<line x1="570.69" y1="529.40" x2="570.69" y2="532.60" stroke="#9a9a9a" stroke-width="0.6"/>
<line x1="573.98" y1="529.40" x2="573.98" y2="532.60" stroke="#9a9a9a" stroke-width="0.6"/>
<line x1="577.27" y1="529.40" x2="577.27" y2="532.60" stroke="#9a9a9a" stroke-width="0.6"/>
<line x1="580.56" y1="529.40" x2="580.56" y2="532.60" stroke="#9a9a9a" stroke-width="0.6"/>
<line x1="583.85" y1="529.40" x2="583.85" y2="533.60" stroke="#9a9a9a" stroke-width="0.6"/>
<line x1="587.14" y1="529.40" x2="587.14" y2="532.60" stroke="#9a9a9a" stroke-width="0.6"/>
<line x1="590.43" y1="529.40" x2="590.43" y2="532.60" stroke="#9a9a9a" stroke-width="0.6"/>
<line x1="593.72" y1="529.40" x2="593.72" y2="532.60" stroke="#9a9a9a" stroke-width="0.6"/>
<line x1="597.01" y1="529.40" x2="597.01" y2="532.60" stroke="#9a9a9a" stroke-width="0.6"/>
<line x1="600.30" y1="529.40" x2="600.30" y2="533.60" stroke="#9a9a9a" stroke-width="0.6"/>
<line x1="603.59" y1="529.40" x2="603.59" y2="532.60" stroke="#9a9a9a" stroke-width="0.6"/>
<line x1="606.88" y1="529.40" x2="606.88" y2="532.60" stroke="#9a9a9a" stroke-width="0.6"/>
<line x1="610.17" y1="529.40" x2="610.17" y2="532.60" stroke="#9a9a9a" stroke-width="0.6"/>
<line x1="613.46" y1="529.40" x2="613.46" y2="532.60" stroke="#9a9a9a" stroke-width="0.6"/>
<line x1="616.75" y1="529.40" x2="616.75" y2="533.60" stroke="#9a9a9a" stroke-width="0.6"/>
<line x1="620.04" y1="529.40" x2="620.04" y2="532.60" stroke="#9a9a9a" stroke-width="0.6"/>
<line x1="623.33" y1="529.40" x2="623.33" y2="532.60" stroke="#9a9a9a" stroke-width="0.6"/>
<line x1="626.62" y1="529.40" x2="626.62" y2="532.60" stroke="#9a9a9a" stroke-width="0.6"/>
<line x1="629.91" y1="529.40" x2="629.91" y2="532.60" stroke="#9a9a9a" stroke-width="0.6"/>
<line x1="633.20" y1="529.40" x2="633.20" y2="533.60" stroke="#9a9a9a" stroke-width="0.6"/>
<line x1="636.49" y1="529.40" x2="636.49" y2="532.60" stroke="#9a9a9a" stroke-width="0.6"/>
<line x1="639.78" y1="529.40" x2="639.78" y2="532.60" stroke="#9a9a9a" stroke-width="0.6"/>
<line x1="643.07" y1="529.40" x2="643.07" y2="532.60" stroke="#9a9a9a" stroke-width="0.6"/>
<line x1="646.36" y1="529.40" x2="646.36" y2="532.60" stroke="#9a9a9a" stroke-width="0.6"/>
<line x1="649.65" y1="529.40" x2="649.65" y2="533.60" stroke="#9a9a9a" stroke-width="0.6"/>
<line x1="652.94" y1="529.40" x2="652.94" y2="532.60" stroke="#9a9a9a" stroke-width="0.6"/>
<line x1="656.23" y1="529.40" x2="656.23" y2="532.60" stroke="#9a9a9a" stroke-width="0.6"/>
<line x1="659.52" y1="529.40" x2="659.52" y2="532.60" stroke="#9a9a9a" stroke-width="0.6"/>
<line x1="662.81" y1="529.40" x2="662.81" y2="532.60" stroke="#9a9a9a" stroke-width="0.6"/>
<line x1="666.10" y1="529.40" x2="666.10" y2="533.60" stroke="#9a9a9a" stroke-width="0.6"/>
<polygon points="407.90,529.06 408.40,528.86 408.90,528.58 409.40,528.17 409.90,527.61 410.40,526.84 410.90,525.83 411.40,524.53 411.90,522.91 412.40,520.95 412.90,518.64 413.40,516.02 413.90,513.14 414.40,510.08 414.90,506.97 415.40,503.96 415.90,501.19 416.40,498.83 416.90,497.02 417.40,495.89 417.90,495.50 418.40,495.83 418.90,496.81 419.40,498.37 419.90,500.44 420.40,502.89 420.90,505.61 421.40,508.47 421.90,511.34 422.40,514.12 422.90,516.73 423.40,519.09 423.90,521.18 424.40,522.97 424.90,524.47 425.40,525.70 425.90,526.67 426.40,527.43 426.90,528.00 427.40,528.43 427.90,528.74 428.40,528.96 428.90,529.11" fill="#62b22e" stroke="#2a3a20" stroke-width="0.7"/>
<line x1="386.6" y1="529.90" x2="666.3" y2="529.90" stroke="#555" stroke-width="0.9"/>
<line x1="386.6" y1="529.10" x2="666.3" y2="529.10" stroke="#e07070" stroke-width="1.0"/>
<line x1="406.6" y1="529.40" x2="431.3" y2="529.40" stroke="#333" stroke-width="0.7"/>
<line x1="406.6" y1="525.40" x2="406.6" y2="529.40" stroke="#333" stroke-width="0.6"/>
<line x1="431.3" y1="525.40" x2="431.3" y2="529.40" stroke="#333" stroke-width="0.6"/>
<line x1="418.50" y1="495.30" x2="422.30" y2="495.30" stroke="#555" stroke-width="0.5"/>
<text x="443.20" y="494.30" font-size="6.4" fill="#4a4c98" stroke="#4a4c98" stroke-width="0.12" text-anchor="middle">Piperacillin D5</text>
<text x="443.20" y="502.40" font-size="6.4" fill="#4a4c98" stroke="#4a4c98" stroke-width="0.12" text-anchor="middle">2.49</text>
<text x="443.20" y="509.70" font-size="6.4" fill="#4a4c98" stroke="#4a4c98" stroke-width="0.12" text-anchor="middle">5080.83</text>
<text x="669.70" y="532.30" font-size="6.9" fill="#3f4fb0" stroke="#3f4fb0" stroke-width="0.12">min</text>
<text x="402.90" y="539.5" font-size="6.55" fill="#3f4fb0" stroke="#3f4fb0" stroke-width="0.12" text-anchor="middle">2.40</text>
<text x="435.80" y="539.5" font-size="6.55" fill="#3f4fb0" stroke="#3f4fb0" stroke-width="0.12" text-anchor="middle">2.60</text>
<text x="468.70" y="539.5" font-size="6.55" fill="#3f4fb0" stroke="#3f4fb0" stroke-width="0.12" text-anchor="middle">2.80</text>
<text x="501.60" y="539.5" font-size="6.55" fill="#3f4fb0" stroke="#3f4fb0" stroke-width="0.12" text-anchor="middle">3.00</text>
<text x="534.50" y="539.5" font-size="6.55" fill="#3f4fb0" stroke="#3f4fb0" stroke-width="0.12" text-anchor="middle">3.20</text>
<text x="567.40" y="539.5" font-size="6.55" fill="#3f4fb0" stroke="#3f4fb0" stroke-width="0.12" text-anchor="middle">3.40</text>
<text x="600.30" y="539.5" font-size="6.55" fill="#3f4fb0" stroke="#3f4fb0" stroke-width="0.12" text-anchor="middle">3.60</text>
<text x="633.20" y="539.5" font-size="6.55" fill="#3f4fb0" stroke="#3f4fb0" stroke-width="0.12" text-anchor="middle">3.80</text>
<text x="666.10" y="539.5" font-size="6.55" fill="#3f4fb0" stroke="#3f4fb0" stroke-width="0.12" text-anchor="middle">4.00</text>
</svg>
</body></html>
